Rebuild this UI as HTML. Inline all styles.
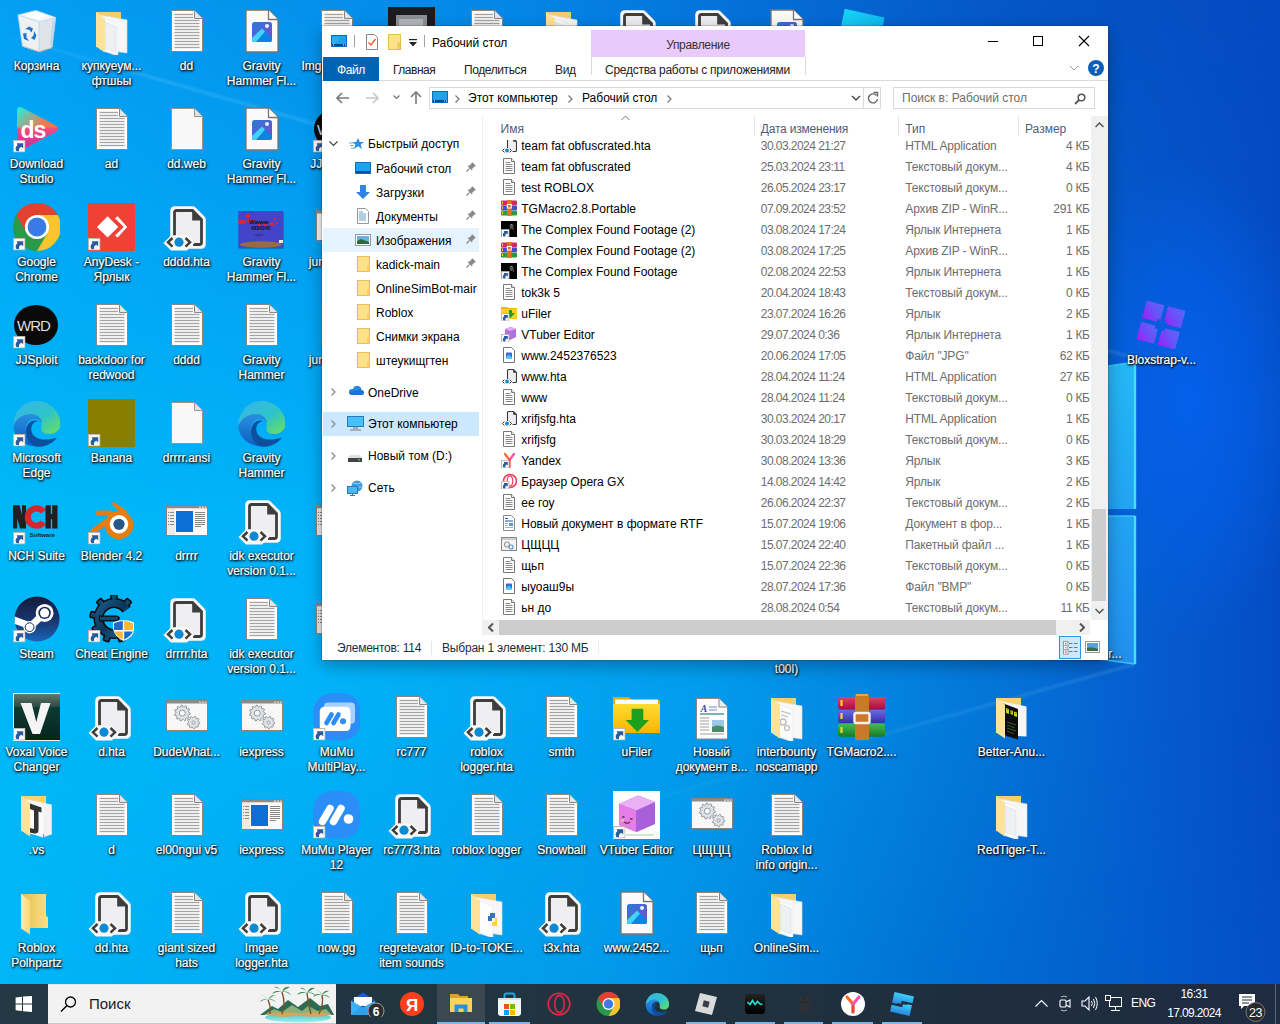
<!DOCTYPE html><html><head><meta charset="utf-8"><style>
*{box-sizing:border-box}
html,body{margin:0;padding:0}
body{width:1280px;height:1024px;overflow:hidden;position:relative;font-family:"Liberation Sans",sans-serif;font-size:12px;background:#0570d8}
.abs{position:absolute}
#wall{position:absolute;left:0;top:0;width:1280px;height:1024px}
.ic{position:absolute;width:75px;height:98px}
.ic svg.g{position:absolute;left:13px;top:7px;width:48px;height:48px}
.lb{position:absolute;left:0;top:59px;width:75px;text-align:center;color:#fff;-webkit-text-stroke:.2px #fff;line-height:15px;font-size:12px;text-shadow:1px 1px 2px rgba(0,0,0,1),0 1px 3px rgba(0,0,0,.8),0 0 2px rgba(0,0,0,.6);white-space:nowrap}
#win{position:absolute;left:322px;top:26px;width:786px;height:634px;background:#fff;box-shadow:0 0 0 1px rgba(40,40,40,.18),0 5px 16px rgba(0,0,0,.32)}
#tb{position:absolute;left:0;top:984px;width:1280px;height:40px;background:linear-gradient(90deg,#233a44 0%,#21343f 40%,#1f2e3e 74%,#1e2b42 100%)}
.t{position:absolute;white-space:nowrap}
</style></head><body>
<svg id="wall" width="1280" height="1024" viewBox="0 0 1280 1024">
<defs>
<linearGradient id="gm" x1="0" y1="0" x2="1280" y2="0" gradientUnits="userSpaceOnUse">
<stop offset="0" stop-color="#00b8f8"/><stop offset="0.25" stop-color="#02b2f9"/><stop offset="0.55" stop-color="#029cec"/><stop offset="0.78" stop-color="#0474d8"/><stop offset="0.9" stop-color="#065cce"/><stop offset="1" stop-color="#044cc4"/>
</linearGradient>
<linearGradient id="gt" x1="0" y1="0" x2="1280" y2="0" gradientUnits="userSpaceOnUse">
<stop offset="0" stop-color="#039ff4"/><stop offset="0.41" stop-color="#0485e5"/><stop offset="0.78" stop-color="#0556c6"/><stop offset="1" stop-color="#044ac0"/>
</linearGradient>
<linearGradient id="gb" x1="0" y1="0" x2="1280" y2="0" gradientUnits="userSpaceOnUse">
<stop offset="0" stop-color="#00b6f8"/><stop offset="0.47" stop-color="#029aea"/><stop offset="0.74" stop-color="#0070d4"/><stop offset="1" stop-color="#044ec4"/>
</linearGradient>
<linearGradient id="mt" x1="0" y1="0" x2="0" y2="1024" gradientUnits="userSpaceOnUse">
<stop offset="0" stop-color="#fff"/><stop offset="0.5" stop-color="#000"/>
</linearGradient>
<linearGradient id="mb" x1="0" y1="0" x2="0" y2="1024" gradientUnits="userSpaceOnUse">
<stop offset="0.7" stop-color="#000"/><stop offset="0.95" stop-color="#fff"/>
</linearGradient>
<mask id="mkt"><rect width="1280" height="1024" fill="url(#mt)"/></mask>
<mask id="mkb"><rect width="1280" height="1024" fill="url(#mb)"/></mask>
<filter id="bl2"><feGaussianBlur stdDeviation="1.2"/></filter>
</defs>
<rect width="1280" height="1024" fill="url(#gm)"/>
<rect width="1280" height="1024" fill="url(#gt)" mask="url(#mkt)"/>
<rect width="1280" height="1024" fill="url(#gb)" mask="url(#mkb)"/>
<radialGradient id="glow" cx="1190" cy="400" r="220" gradientUnits="userSpaceOnUse" gradientTransform="translate(1190 400) scale(.55 1.1) translate(-1190 -400)"><stop offset="0" stop-color="#0462ee" stop-opacity=".9"/><stop offset=".55" stop-color="#0460ea" stop-opacity=".55"/><stop offset="1" stop-color="#0460ea" stop-opacity="0"/></radialGradient>
<linearGradient id="pane" x1="0" y1="362" x2="0" y2="664" gradientUnits="userSpaceOnUse"><stop offset="0" stop-color="#26b8f6"/><stop offset=".25" stop-color="#22aef4"/><stop offset=".8" stop-color="#2298f2"/><stop offset="1" stop-color="#2090ee"/></linearGradient>
<rect x="1000" y="150" width="280" height="520" fill="url(#glow)"/>
<linearGradient id="sl1" x1="0" y1="0" x2="1135" y2="0" gradientUnits="userSpaceOnUse"><stop offset="0" stop-color="#9fe4ff" stop-opacity="0"/><stop offset=".12" stop-color="#9fe4ff" stop-opacity=".2"/><stop offset="1" stop-color="#9fe4ff" stop-opacity=".15"/></linearGradient><linearGradient id="sl2" x1="0" y1="0" x2="1135" y2="0" gradientUnits="userSpaceOnUse"><stop offset="0" stop-color="#9fe4ff" stop-opacity="0"/><stop offset=".5" stop-color="#9fe4ff" stop-opacity=".02"/><stop offset="1" stop-color="#9fe4ff" stop-opacity=".16"/></linearGradient><path d="M0 34L1135 358" stroke="url(#sl1)" stroke-width="3" filter="url(#bl2)"/>
<path d="M0 982L1135 664" stroke="url(#sl2)" stroke-width="3" filter="url(#bl2)"/>
<polygon points="1000,382 1135,362 1135,509 1000,509" fill="url(#pane)"/>
<polygon points="1000,516 1135,516 1135,664 1000,646" fill="url(#pane)"/>
<path d="M1135 362V509M1135 516V664" stroke="#48dcff" stroke-width="2.4"/>
<path d="M1000 382L1135 362M1000 516H1135M1000 646L1135 664" stroke="#40d0ff" stroke-width="1.6" stroke-opacity=".8"/>
</svg>
<svg width="0" height="0" style="position:absolute"><defs><symbol id="s-txt" viewBox="0 0 48 48"><path d="M9.5 3.5H32.5L40.5 11.5V44.5H9.5Z" fill="#fdfdfd" stroke="#8c8680"/><path d="M32.5 3.5V11.5H40.5" fill="#e6e6e6" stroke="#8c8680"/><g stroke="#a4a4a4" stroke-width="1.3"><path d="M12.5 7.5H31"/><path d="M12.5 10.5H31"/><path d="M12.5 13.5H37.5"/><path d="M12.5 16.5H37.5"/><path d="M12.5 19.5H37.5"/><path d="M12.5 22.5H37.5"/><path d="M12.5 25.5H37.5"/><path d="M12.5 28.5H37.5"/><path d="M12.5 31.5H37.5"/><path d="M12.5 34.5H37.5"/><path d="M12.5 37.5H37.5"/><path d="M12.5 40.5H37.5"/></g></symbol><symbol id="s-blank" viewBox="0 0 48 48"><path d="M9.5 3.5H32.5L40.5 11.5V44.5H9.5Z" fill="#f8f8f8" stroke="#9a9490"/><path d="M32.5 3.5V11.5H40.5" fill="#e2e2e2" stroke="#9a9490"/></symbol><symbol id="s-img" viewBox="0 0 48 48"><defs><linearGradient id="imgg" x1="0" y1="0" x2="1" y2="1"><stop offset="0" stop-color="#2a7ad8"/><stop offset="1" stop-color="#7a4ac8"/></linearGradient></defs><path d="M9 3H31.5L41 12.5V45H9Z" fill="#fafafa" stroke="#7a746e" stroke-width="1.3"/><path d="M31.5 3V12.5H41" fill="#fff" stroke="#7a746e" stroke-width="1.3"/><rect x="15" y="15" width="20" height="20" rx="2.5" fill="url(#imgg)"/><path d="M15 31L25 21.5L35 31V32.5Q35 35 32.5 35H17.5Q15 35 15 32.5Z" fill="#0c84e4"/><path d="M15 31L25 21.5L28 24.5L19 35H17.5Q15 35 15 32.5Z" fill="#42d2fa"/><circle cx="30" cy="19" r="2" fill="#e8f4ff"/></symbol><symbol id="s-hta" viewBox="0 0 48 48"><path d="M12.5 7.5H30.5L39.5 16.5V41.5H12.5Z" fill="#fbfbfb" stroke="#fbf8f6" stroke-width="8.5" stroke-linejoin="round"/><path d="M12.5 9.5Q12.5 7.5 14.5 7.5H30.5L39.5 16.5V39.5Q39.5 41.5 37.5 41.5H14.5Q12.5 41.5 12.5 39.5Z" fill="#efeff2"/><path d="M12.5 32.5V9.5Q12.5 7.5 14.5 7.5H30.5L39.5 16.5V39.5Q39.5 41.5 37.5 41.5H31" fill="none" stroke="#3e3e3e" stroke-width="2.8"/><path d="M30.2 7.5V17.5H39.5Z" fill="#3e3e3e"/><path d="M1.5 40L9 32.5H25L32.5 40L25 47.5H9Z" fill="#fbf8f6"/><path d="M10.5 35L6 39.3L10.5 43.6M23.5 35L28 39.3L23.5 43.6" stroke="#3e3e3e" stroke-width="2.5" fill="none"/><circle cx="17" cy="39.2" r="4.6" fill="#0a8ad2"/></symbol><symbol id="s-folder" viewBox="0 0 48 48"><defs><linearGradient id="fbk" x1="0" x2="1"><stop offset="0" stop-color="#e6bd50"/><stop offset="1" stop-color="#fadf86"/></linearGradient><linearGradient id="ffr" x1="0" x2="1"><stop offset="0" stop-color="#feeaa8"/><stop offset="1" stop-color="#fbd878"/></linearGradient></defs><path d="M9 5H34V26.5L36 28.5V39H9Z" fill="url(#fbk)"/><path d="M9 5L18 11.5V45.5L9 39.5Z" fill="url(#ffr)"/></symbol><symbol id="s-foldergear" viewBox="0 0 48 48"><path d="M9 5H34V40H9Z" fill="#f2cf6c"/><path d="M13 8L40 13V46L13 42Z" fill="#f7f7f7" stroke="#e2e2e2" stroke-width=".6"/><path d="M16 11L31 17V49L16 44Z" fill="#fcfcfc" stroke="#e6e6e6" stroke-width=".5"/><path d="M19 18L29 21M19 22L26 24" stroke="#9aa" stroke-width=".8"/><circle cx="21" cy="29" r="3" fill="none" stroke="#b8bcc0" stroke-width="1.4"/><circle cx="25" cy="35" r="2.5" fill="none" stroke="#b8bcc0" stroke-width="1.2"/><path d="M9 5L18 11.5V45.5L9 39.5Z" fill="#fde39a"/></symbol><symbol id="s-folderpy" viewBox="0 0 48 48"><path d="M9 5H34V40H9Z" fill="#f2cf6c"/><path d="M13 8L40 13V46L13 42Z" fill="#f7f7f7" stroke="#e2e2e2" stroke-width=".6"/><path d="M16 11L31 17V49L16 44Z" fill="#fcfcfc" stroke="#e6e6e6" stroke-width=".5"/><path d="M9 5L18 11.5V45.5L9 39.5Z" fill="#fde39a"/><path d="M28 24h5v5h-3v3h-4v-5h2z" fill="#3b73b0"/><path d="M33 29h2v8h-5v-4h3z" fill="#ffd43b"/></symbol><symbol id="s-folderdark" viewBox="0 0 48 48"><path d="M9 5H34V40H9Z" fill="#f4d474"/><path d="M13 8L39.5 13.5V43.5L13 42Z" fill="#f6f6f6"/><path d="M12.5 9L31 16V46.5L18 42.5V12Z" fill="#0c0c0c"/><path d="M19 15L22 16V21L19 20ZM23.5 17L26 18V22L23.5 21ZM27 18.5L30 19.5V24L27 23Z" fill="#b8d820"/><path d="M20 16.5h1.5M24 19h1.5M28 20.5h1.5" stroke="#f05020" stroke-width="1"/><path d="M20 29L29 32M20 32L28 35M20 35L29 38M20 38L27 41" stroke="#4a6a2a" stroke-width=".8"/><path d="M9 5L18 11.5V45.5L9 39.5Z" fill="#fde39a"/></symbol><symbol id="s-folderj" viewBox="0 0 48 48"><path d="M9 5H34V40H9Z" fill="#f4d474"/><path d="M13 8L39.5 13.5V43.5L13 42Z" fill="#f6f6f6"/><path d="M12.5 9L31 16V46.5L18 42.5V12Z" fill="#fafafa"/><path d="M18 12.5L29.5 16.5V21.5L26.5 20.5V39Q26.5 43 22 42.5L18 41.5V37L22 38V19.5L18 18Z" fill="#333"/><path d="M32 15L39.5 14V43.5L32 46Z" fill="#f2f2f2"/><path d="M9 5L18 11.5V45.5L9 39.5Z" fill="#fde39a"/></symbol><symbol id="s-appwin" viewBox="0 0 48 48"><rect x="4.5" y="8.5" width="41" height="30" fill="#f4f4f4" stroke="#8a8480"/><rect x="5" y="9" width="40" height="2.5" fill="#888c90"/><path d="M37 10.2h2M40 10.2h2M43 10.2h1.5" stroke="#ddd" stroke-width="1.2"/><rect x="5" y="11.5" width="8" height="26.5" fill="#ebebeb"/><rect x="13" y="11.5" width="32" height="26.5" fill="#fafafa"/><rect x="14" y="14" width="17" height="21" fill="#0a70d6"/><g stroke="#888" stroke-width="1"><path d="M6 15.5h1M6 18.5h1M6 21.5h1M6 24.5h1M6 27.5h1M8 15.5h4M8 18.5h4M8 21.5h4M8 24.5h4M8 27.5h4"/><path d="M33 15.5h10M33 17.5h10M33 19.5h10M33 21.5h10M33 23.5h10M33 25.5h10M33 27.5h10M33 29.5h6"/></g></symbol><symbol id="s-gears" viewBox="0 0 48 48"><rect x="4.5" y="7.5" width="41" height="30" fill="#f8f8f8" stroke="#8a8480"/><rect x="5" y="8" width="40" height="2.5" fill="#888c90"/><path d="M37 9.2h2M40 9.2h2M43 9.2h1.5" stroke="#ddd" stroke-width="1.2"/><polygon points="28.30,20.10 28.22,21.24 26.34,21.87 26.03,22.72 27.03,24.43 26.35,25.34 24.43,24.86 23.71,25.40 23.62,27.38 22.55,27.78 21.20,26.34 20.30,26.40 19.16,28.02 18.05,27.78 17.68,25.83 16.89,25.40 15.06,26.15 14.25,25.34 15.00,23.51 14.57,22.72 12.62,22.35 12.38,21.24 14.00,20.10 14.06,19.20 12.62,17.85 13.02,16.78 15.00,16.69 15.54,15.97 15.06,14.05 15.97,13.37 17.68,14.37 18.53,14.06 19.16,12.18 20.30,12.10 21.20,13.86 22.07,14.06 23.62,12.82 24.63,13.37 24.43,15.34 25.06,15.97 27.03,15.77 27.58,16.78 26.34,18.33 26.54,19.20" fill="#dfe3e7" stroke="#8c9096" stroke-width=".9"/><circle cx="20.3" cy="20.1" r="3" fill="#f8f8f8" stroke="#8c9096" stroke-width=".9"/><polygon points="37.80,29.50 37.70,30.59 36.10,31.18 35.74,31.95 36.33,33.55 35.55,34.33 33.95,33.74 33.18,34.10 32.59,35.70 31.50,35.80 30.65,34.33 29.82,34.10 28.35,34.96 27.45,34.33 27.75,32.65 27.26,31.95 25.58,31.65 25.30,30.59 26.60,29.50 26.67,28.65 25.58,27.35 26.04,26.35 27.75,26.35 28.35,25.75 28.35,24.04 29.35,23.58 30.65,24.67 31.50,24.60 32.59,23.30 33.65,23.58 33.95,25.26 34.65,25.75 36.33,25.45 36.96,26.35 36.10,27.82 36.33,28.65" fill="#dfe3e7" stroke="#8c9096" stroke-width=".9"/><circle cx="31.5" cy="29.5" r="1.5" fill="#f8f8f8" stroke="#8c9096" stroke-width=".9"/></symbol><symbol id="s-recycle" viewBox="0 0 48 48"><path d="M6 8L27.2 14.8V44.7L10.5 39.2Z" fill="#eef0f2" stroke="#c4dcf0" stroke-width=".8"/><path d="M27.2 14.8L43.7 10.5L40 40.5L27.2 44.7Z" fill="#dfe4e8" stroke="#c4dcf0" stroke-width=".8"/><path d="M40.5 14L43 11L40 40L38 38Z" fill="#b8d4ec" opacity=".8"/><path d="M24 3.5L43.7 10.5L27.2 14.8L6 8Z" fill="#f6f7f8" stroke="#c8dcee" stroke-width=".8"/><path d="M15 9Q18 3 21 6Q24 2 27 7Q31 4 33 9L28 12L16 10Z" fill="#fff"/><path d="M10.5 39.2L27.2 44.7L40 40.5" fill="none" stroke="#d8b8a0" stroke-width="1"/><g fill="#1a74d4"><path d="M13.5 22L17 19.5L21 21.5L19.5 25.5L17.5 23Z"/><path d="M22 24L24.5 28.5L22.5 33L19 31L21.5 28.5Z"/><path d="M17 34L12 32L11 26.5L14.5 26L14.5 30.5Z"/></g></symbol><symbol id="s-chrome" viewBox="0 0 48 48"><circle cx="25" cy="24" r="23.9" fill="#2a9a48"/><path d="M25 24L25 12L45.7 12A23.9 23.9 0 0 0 4.3 12L14.6 30Z" fill="#e3412f"/><path d="M25 24L25 12L45.7 12A23.9 23.9 0 0 1 25 47.9L35.4 30Z" fill="#fcc42c"/><circle cx="25" cy="24" r="12.1" fill="#fff"/><circle cx="25" cy="24" r="9.4" fill="#3a7ae6"/></symbol><symbol id="s-edge" viewBox="0 0 48 48"><defs><linearGradient id="edA" x1="0" y1="0" x2="1" y2="1"><stop offset="0" stop-color="#38b4f0"/><stop offset=".55" stop-color="#2ec4c8"/><stop offset="1" stop-color="#6ee05a"/></linearGradient><linearGradient id="edB" x1="0" y1="0" x2="0" y2="1"><stop offset="0" stop-color="#2a8ee0"/><stop offset="1" stop-color="#0c60c0"/></linearGradient></defs><path d="M1.5 27A23.5 23.5 0 0 1 48.5 24C48.5 31 44 35 37 35C31 35 28.5 32 29.5 28C30.5 23 27 18 21 18C12 18 4 22 1.5 27Z" fill="url(#edA)"/><path d="M1.5 27C3 21 10 15 19 15C26 15 30 20 30 24C28 20 24 19 20 20C15 22 13 27 14 33C15 40 20 45 24 47.5C11 46.5 1.5 38 1.5 27Z" fill="url(#edB)"/><path d="M14 32C14 24 21 20 26 22C21 23 18.5 27 19.5 32C21 40 31 43 45 38.5C41 44.5 33 48 25 47.8C18.5 46 14 40 14 32Z" fill="#0e4e9e"/></symbol><symbol id="s-anydesk" viewBox="0 0 48 48"><rect x="1" y="0" width="47" height="48" fill="#ef4136"/><path d="M9.9 23.9L20.6 13.2L31.3 23.9L20.6 34.6Z" fill="#fff"/><path d="M28 15.2L30.7 13.2L40.2 23.9L30.7 34.6L28 32.6L36.7 23.9Z" fill="#fff"/></symbol><symbol id="s-steam" viewBox="0 0 48 48"><defs><linearGradient id="stg" x1="0" y1="0" x2="0" y2="1"><stop offset="0" stop-color="#141a3a"/><stop offset=".6" stop-color="#1a3a78"/><stop offset="1" stop-color="#1a66b8"/></linearGradient></defs><circle cx="25" cy="24" r="22.5" fill="url(#stg)"/><path d="M2.6 21.5L16 26.5L14 33L2.8 29Z" fill="#fff"/><path d="M17.6 32.2L32.6 17.9" stroke="#fff" stroke-width="7"/><circle cx="32.6" cy="17.9" r="9" fill="#fff"/><circle cx="32.6" cy="17.9" r="6.2" fill="#1c2a5a"/><circle cx="32.6" cy="17.9" r="4.6" fill="#fff"/><circle cx="17.6" cy="32.2" r="6.2" fill="#fff"/><circle cx="17.6" cy="32.2" r="4.4" fill="none" stroke="#1c2a5a" stroke-width="1"/></symbol><symbol id="s-blender" viewBox="0 0 48 48"><path d="M3 33L6.5 36.5L22 27L18.5 22Z" fill="#e87d0d"/><rect x="9" y="13.5" width="16" height="5" rx="2.5" fill="#e87d0d"/><path d="M24.5 6.5Q26.5 4.5 28.5 6L41 15L36 18.5Z" fill="#e87d0d"/><circle cx="32" cy="28" r="14.2" fill="#e87d0d"/><circle cx="32" cy="27.3" r="9.2" fill="#fff"/><circle cx="32" cy="27.3" r="5.6" fill="#265787"/></symbol><symbol id="s-cheat" viewBox="0 0 48 48"><defs><linearGradient id="ceg" x1="0" y1="0" x2="1" y2="1"><stop offset="0" stop-color="#1a5a8a"/><stop offset=".5" stop-color="#0c3458"/><stop offset="1" stop-color="#1a6aa0"/></linearGradient></defs><g fill="#0a0a0a"><rect x="36.75" y="3.66" width="7.5" height="7.5" rx="2" transform="rotate(40 40.50 7.41)"/><rect x="23.25" y="-1.25" width="7.5" height="7.5" rx="2" transform="rotate(0 27.00 2.50)"/><rect x="9.75" y="3.66" width="7.5" height="7.5" rx="2" transform="rotate(-40 13.50 7.41)"/><rect x="2.57" y="16.10" width="7.5" height="7.5" rx="2" transform="rotate(-80 6.32 19.85)"/><rect x="5.06" y="30.25" width="7.5" height="7.5" rx="2" transform="rotate(-120 8.81 34.00)"/><rect x="16.07" y="39.48" width="7.5" height="7.5" rx="2" transform="rotate(-160 19.82 43.23)"/><rect x="30.43" y="39.48" width="7.5" height="7.5" rx="2" transform="rotate(-200 34.18 43.23)"/></g><path d="M39.70 14.61 A15.5 15.5 0 1 0 34.75 36.92" fill="none" stroke="#0a0a0a" stroke-width="10"/><g fill="#14466e"><rect x="38.25" y="5.16" width="4.5" height="4.5" rx="1" transform="rotate(40 40.50 7.41)"/><rect x="24.75" y="0.25" width="4.5" height="4.5" rx="1" transform="rotate(0 27.00 2.50)"/><rect x="11.25" y="5.16" width="4.5" height="4.5" rx="1" transform="rotate(-40 13.50 7.41)"/><rect x="4.07" y="17.60" width="4.5" height="4.5" rx="1" transform="rotate(-80 6.32 19.85)"/><rect x="6.56" y="31.75" width="4.5" height="4.5" rx="1" transform="rotate(-120 8.81 34.00)"/><rect x="17.57" y="40.98" width="4.5" height="4.5" rx="1" transform="rotate(-160 19.82 43.23)"/><rect x="31.93" y="40.98" width="4.5" height="4.5" rx="1" transform="rotate(-200 34.18 43.23)"/></g><path d="M39.70 14.61 A15.5 15.5 0 1 0 34.75 36.92" fill="none" stroke="url(#ceg)" stroke-width="7"/><path d="M12 20.5H30Q36 23 30 26.5H12Z" fill="#0a0a0a"/><path d="M13 21.8H29.5Q33 23.5 29.5 25.2H13Z" fill="#14466e"/><path d="M26 27.5Q31 25 36.5 25.2Q42 25 47 27.5V34Q47 42 36.5 46Q28 42 26 34Z" fill="#fff"/><path d="M27 28.2Q31 26.2 35.8 26V35H27Z" fill="#1a6ad0"/><path d="M37.2 26Q42 26.2 46 28.2V35H37.2Z" fill="#fbb830"/><path d="M27.2 36.5H35.8V44.5Q29 41 27.2 36.5Z" fill="#fbb830"/><path d="M37.2 36.5H45.8Q44 41 37.2 44.5Z" fill="#1a6ad0"/></symbol><symbol id="s-nch" viewBox="0 0 48 48"><path d="M1 8.3H7.5L10 18V8.3H14V31.6H8L5.2 21.5V31.6H1Z" fill="#231f20"/><path d="M34 13A11.8 11.8 0 1 0 34 27L28.8 23.5A5.6 5.6 0 1 1 28.8 16.5Z" fill="#d8262c"/><path d="M33.5 8.3H38.8V17H40.2V8.3H45.5V31.6H40.2V22.3H38.8V31.6H33.5Z" fill="#231f20"/><text x="17.5" y="40" font-family="Liberation Sans" font-weight="bold" font-size="6.2" fill="#231f20" letter-spacing="-.1">Software</text></symbol><symbol id="s-voxal" viewBox="0 0 48 48"><defs><linearGradient id="vxg" x1="0" y1="0" x2="0" y2="1"><stop offset="0" stop-color="#667a70"/><stop offset=".28" stop-color="#2a4a42"/><stop offset=".3" stop-color="#0c3a32"/><stop offset="1" stop-color="#08241e"/></linearGradient></defs><rect x="1.5" y="0.5" width="47" height="47" fill="url(#vxg)" stroke="#f4f4f4" stroke-width="1"/><path d="M8.5 10H19.5L24.3 29L29 10H38.5L28 41H20.5Z" fill="#f4f4f4"/></symbol><symbol id="s-mumu" viewBox="0 0 48 48"><path d="M1.2 22Q1.2 0 23 0H27Q48.8 0 48.8 22V26Q48.8 47.5 27 47.5H23Q1.2 47.5 1.2 26Z" fill="#2b8ef8"/><path d="M10.5 30.5L18 17.5M21.5 30.5L29 17.5" stroke="#fff" stroke-width="7.5" stroke-linecap="round"/><circle cx="36.5" cy="28" r="4.8" fill="#fff"/></symbol><symbol id="s-mumumulti" viewBox="0 0 48 48"><path d="M1.2 22Q1.2 0 23 0H27Q48.8 0 48.8 22V26Q48.8 47.5 27 47.5H23Q1.2 47.5 1.2 26Z" fill="#2b8ef8"/><rect x="12" y="9.4" width="31" height="21.3" rx="4" fill="#a9d1ff"/><rect x="7.8" y="13.8" width="30.7" height="24.2" rx="4.5" fill="#fff"/><path d="M14.5 30L19.5 21.5M21.5 30L26.5 21.5" stroke="#2b8ef8" stroke-width="4.6" stroke-linecap="round"/><circle cx="31" cy="28.3" r="3" fill="#2b8ef8"/></symbol><symbol id="s-ufiler" viewBox="0 0 48 48"><path d="M1 4H17L20 7H48V40H1Z" fill="#e8a800"/><rect x="3" y="6.5" width="43" height="5" fill="#fafafa"/><defs><linearGradient id="ufg" x1="0" y1="0" x2="0" y2="1"><stop offset="0" stop-color="#ffdc30"/><stop offset="1" stop-color="#f8b400"/></linearGradient></defs><path d="M1 11H48V40H1Z" fill="url(#ufg)"/><path d="M19.6 15.7H31.3V27H37L25.4 39L13.7 27H19.6Z" fill="#1ca01c"/></symbol><symbol id="s-vtuber" viewBox="0 0 48 48"><rect x="1" y="0" width="47.5" height="48" fill="#fdfdfd"/><path d="M7 13L26 4.5L43 11V33L25 41L7 34Z" fill="#a860d8"/><path d="M7 13L24 19.5L43 11L26 4.5Z" fill="#eab0f6"/><path d="M7 13L24 19.5V41L7 34Z" fill="#e67ce6"/><path d="M10 26h2.5M18 28h2.5" stroke="#5a3a3a" stroke-width="1.6"/><path d="M12 31q3 2.5 6 0" stroke="#5a3a3a" stroke-width="1.3" fill="none"/><circle cx="10.5" cy="29.5" r="1.2" fill="#f8e070" opacity=".8"/><path d="M14 44h28" stroke="#ccc" stroke-width="2" opacity=".6"/></symbol><symbol id="s-winrar" viewBox="0 0 48 48"><defs><linearGradient id="wr1" x1="0" y1="0" x2="0" y2="1"><stop offset="0" stop-color="#e0406a"/><stop offset="1" stop-color="#a01040"/></linearGradient><linearGradient id="wr2" x1="0" y1="0" x2="0" y2="1"><stop offset="0" stop-color="#6a6ae8"/><stop offset="1" stop-color="#3030a8"/></linearGradient><linearGradient id="wr3" x1="0" y1="0" x2="0" y2="1"><stop offset="0" stop-color="#40c050"/><stop offset="1" stop-color="#187a28"/></linearGradient></defs><rect x="1" y="4" width="47.5" height="12.5" rx="3" fill="url(#wr1)"/><rect x="1" y="17" width="47.5" height="13" rx="3" fill="url(#wr2)"/><rect x="1" y="30.5" width="47.5" height="13.3" rx="3" fill="url(#wr3)"/><path d="M4.5 7v6M4.5 20v6M4.5 34v6" stroke="#f8d030" stroke-width="2.2"/><rect x="18" y="1" width="14" height="46" rx="1.5" fill="#c87a2a"/><path d="M19 2h12" stroke="#e8a848" stroke-width="2"/><rect x="17.5" y="20" width="15" height="10" rx="1.5" fill="none" stroke="#f4f0e8" stroke-width="2.4"/></symbol><symbol id="s-ds" viewBox="0 0 48 48"><defs><linearGradient id="dsA" x1="0" y1="0" x2="1" y2="1"><stop offset="0" stop-color="#18f4e0"/><stop offset=".5" stop-color="#f07a52"/><stop offset="1" stop-color="#f0704a"/></linearGradient><linearGradient id="dsB" x1="0" y1="0" x2="0" y2="1"><stop offset="0" stop-color="#f05080" stop-opacity="0"/><stop offset=".45" stop-color="#f04a80" stop-opacity="0"/><stop offset=".5" stop-color="#f04a80"/><stop offset="1" stop-color="#c828a8"/></linearGradient></defs><path d="M5 6Q5 0 11 3L44 20.5Q48 23.5 44 26.5L11 44.5Q5 48 5 42Z" fill="url(#dsA)"/><path d="M5 6Q5 0 11 3L44 20.5Q48 23.5 44 26.5L11 44.5Q5 48 5 42Z" fill="url(#dsB)"/><text x="8.5" y="32.5" font-family="Liberation Sans" font-weight="bold" font-size="23" fill="#fff" letter-spacing="-1">ds</text></symbol><symbol id="s-jjs" viewBox="0 0 48 48"><ellipse cx="24" cy="24" rx="22" ry="20" fill="#0a0a0a"/><text x="5" y="30" font-family="Liberation Sans" font-size="15" fill="#ddd" letter-spacing="-1">WRD</text></symbol><symbol id="s-banana" viewBox="0 0 48 48"><rect x="1" y="0" width="47" height="48" fill="#8b7d00"/></symbol><symbol id="s-gravpic" viewBox="0 0 48 48"><rect x="2" y="9" width="45" height="37" fill="#1a2a60" opacity=".35"/><rect x="1.3" y="8" width="44.7" height="36.7" fill="#4444c8"/><ellipse cx="24" cy="41.5" rx="21" ry="3.2" fill="#9a6a44"/><g fill="#f02020"><ellipse cx="11" cy="13" rx="2.5" ry="2"/><ellipse cx="5" cy="19" rx="4" ry="2"/><ellipse cx="14" cy="18" rx="4" ry="1.5"/><ellipse cx="35" cy="21" rx="2.5" ry="1.6"/><circle cx="38" cy="16" r="1.2"/><circle cx="40" cy="20" r="1"/><ellipse cx="22" cy="22" rx="2" ry="1"/><ellipse cx="28" cy="22" rx="2" ry="1"/></g><text x="12" y="21" font-family="Liberation Sans" font-weight="bold" font-size="6" fill="#111">Wwww</text><text x="14" y="27" font-family="Liberation Sans" font-weight="bold" font-size="5" fill="#111">4934345</text><text x="18" y="33" font-family="Liberation Sans" font-size="4" fill="#222">ssss</text><rect x="42" y="37" width="4" height="3" fill="#eee"/></symbol><symbol id="s-rtf" viewBox="0 0 48 48"><path d="M9.5 5.5H32L40.5 14V46H9.5Z" fill="#fdfdfd" stroke="#8c8680"/><path d="M32 5.5V14H40.5" fill="#ececec" stroke="#8c8680"/><text x="13.5" y="19" font-family="Liberation Serif" font-style="italic" font-weight="bold" font-size="10" fill="#2a4ab8">A</text><path d="M22 14h8M22 17h8" stroke="#6a8ad8" stroke-width="1.2"/><path d="M13 21h24" stroke="#3a9a8a" stroke-width="1.4"/><path d="M13 25h9M13 28h9M13 31h9M13 34h9M13 37h9M13 41h24" stroke="#a0a0a0" stroke-width="1.1"/><rect x="25" y="27" width="12" height="12" fill="#9ac8e8"/><path d="M25 34Q30 31 37 34V39H25Z" fill="#4a8a6a"/></symbol><symbol id="s-blox" viewBox="0 0 48 48"><defs><linearGradient id="bxg" x1="1" y1="0" x2="0" y2="1"><stop offset="0" stop-color="#5868f8"/><stop offset=".5" stop-color="#6a50f8"/><stop offset="1" stop-color="#a818f8"/></linearGradient></defs><g transform="rotate(15 24 24)" fill="url(#bxg)"><path d="M4 4H22V19H19V22H4Z"/><path d="M26 4H44V22H29V19H26Z"/><path d="M4 26H19V29H22V44H4Z"/><path d="M29 26H44V44H26V29H29Z"/></g></symbol><symbol id="s-darkapp" viewBox="0 0 48 48"><rect x="1" y="0" width="47" height="48" fill="#1c1c20"/><rect x="9" y="8" width="31" height="30" fill="#8e8e96"/><rect x="12" y="12" width="24" height="12" fill="#b4b4bc"/></symbol><symbol id="s-cyan" viewBox="0 0 48 48"><defs><linearGradient id="cyg" x1="0" y1="0" x2="1" y2="1"><stop offset="0" stop-color="#18d8fa"/><stop offset="1" stop-color="#0aa8e8"/></linearGradient></defs><path d="M7.7 1.7L47.5 10.6L41 44L1 35Z" fill="url(#cyg)"/><path d="M20 24h8v8h-8z" fill="#0a3a7a" transform="rotate(13 24 28)"/></symbol><symbol id="s-shortcut" viewBox="0 0 12.5 12.5"><rect x=".5" y=".5" width="11.5" height="11.5" fill="#fbfbfb" stroke="#c0b8b0"/><path d="M3 10.5Q1.8 7 4.5 5.3L3.8 3.2H10.2V8.2L8.2 6.8Q5.5 8 6 11Q4 11.5 3 10.5Z" fill="#2c5aa0"/></symbol><symbol id="s-folderdoc" viewBox="0 0 48 48"><path d="M9 5H34V40H9Z" fill="#f2cf6c"/><path d="M13 8L40 13V46L13 42Z" fill="#f7f7f7" stroke="#e2e2e2" stroke-width=".6"/><path d="M16 11L31 17V49L16 44Z" fill="#fcfcfc" stroke="#e6e6e6" stroke-width=".5"/><path d="M18 15L29 19.5V45L18 41Z" fill="#eef0f2" stroke="#9ab8d8" stroke-width=".5" stroke-dasharray="1 1"/><path d="M9 5L18 11.5V45.5L9 39.5Z" fill="#fde39a"/></symbol></defs></svg>
<div id="desk"><div class="ic" style="left:-1px;top:0px"><svg class="g" viewBox="0 0 48 48"><use href="#s-recycle"/></svg><div class="lb">Корзина</div></div><div class="ic" style="left:74px;top:0px"><svg class="g" viewBox="0 0 48 48"><use href="#s-folderdoc"/></svg><div class="lb">купкуеум...<br>фтшьы</div></div><div class="ic" style="left:149px;top:0px"><svg class="g" viewBox="0 0 48 48"><use href="#s-txt"/></svg><div class="lb">dd</div></div><div class="ic" style="left:224px;top:0px"><svg class="g" viewBox="0 0 48 48"><use href="#s-img"/></svg><div class="lb">Gravity<br>Hammer Fl...</div></div><div class="ic" style="left:299px;top:0px"><svg class="g" viewBox="0 0 48 48"><use href="#s-txt"/></svg><div class="lb">Imgae logger</div></div><div class="ic" style="left:374px;top:0px"><svg class="g" viewBox="0 0 48 48"><use href="#s-darkapp"/></svg></div><div class="ic" style="left:449px;top:0px"><svg class="g" viewBox="0 0 48 48"><use href="#s-txt"/></svg></div><div class="ic" style="left:524px;top:0px"><svg class="g" viewBox="0 0 48 48"><use href="#s-folderdoc"/></svg></div><div class="ic" style="left:599px;top:0px"><svg class="g" viewBox="0 0 48 48"><use href="#s-hta"/></svg></div><div class="ic" style="left:674px;top:0px"><svg class="g" viewBox="0 0 48 48"><use href="#s-hta"/></svg></div><div class="ic" style="left:749px;top:0px"><svg class="g" viewBox="0 0 48 48"><use href="#s-img"/></svg></div><div class="ic" style="left:824px;top:0px"><svg class="g" viewBox="0 0 48 48"><use href="#s-cyan"/></svg></div><div class="ic" style="left:-1px;top:98px"><svg class="g" viewBox="0 0 48 48"><use href="#s-ds"/></svg><svg class="abs" style="left:14px;top:42px;width:12.5px;height:12.5px" viewBox="0 0 12.5 12.5"><use href="#s-shortcut"/></svg><div class="lb">Download<br>Studio</div></div><div class="ic" style="left:74px;top:98px"><svg class="g" viewBox="0 0 48 48"><use href="#s-txt"/></svg><div class="lb">ad</div></div><div class="ic" style="left:149px;top:98px"><svg class="g" viewBox="0 0 48 48"><use href="#s-blank"/></svg><div class="lb">dd.web</div></div><div class="ic" style="left:224px;top:98px"><svg class="g" viewBox="0 0 48 48"><use href="#s-img"/></svg><div class="lb">Gravity<br>Hammer Fl...</div></div><div class="ic" style="left:299px;top:98px"><svg class="g" viewBox="0 0 48 48"><use href="#s-jjs"/></svg><svg class="abs" style="left:14px;top:42px;width:12.5px;height:12.5px" viewBox="0 0 12.5 12.5"><use href="#s-shortcut"/></svg><div class="lb">JJSploit-8</div></div><div class="ic" style="left:-1px;top:196px"><svg class="g" viewBox="0 0 48 48"><use href="#s-chrome"/></svg><svg class="abs" style="left:14px;top:42px;width:12.5px;height:12.5px" viewBox="0 0 12.5 12.5"><use href="#s-shortcut"/></svg><div class="lb">Google<br>Chrome</div></div><div class="ic" style="left:74px;top:196px"><svg class="g" viewBox="0 0 48 48"><use href="#s-anydesk"/></svg><svg class="abs" style="left:14px;top:42px;width:12.5px;height:12.5px" viewBox="0 0 12.5 12.5"><use href="#s-shortcut"/></svg><div class="lb">AnyDesk -<br>Ярлык</div></div><div class="ic" style="left:149px;top:196px"><svg class="g" viewBox="0 0 48 48"><use href="#s-hta"/></svg><div class="lb">dddd.hta</div></div><div class="ic" style="left:224px;top:196px"><svg class="g" viewBox="0 0 48 48"><use href="#s-gravpic"/></svg><div class="lb">Gravity<br>Hammer Fl...</div></div><div class="ic" style="left:299px;top:196px"><svg class="g" viewBox="0 0 48 48"><use href="#s-gears"/></svg><div class="lb">juraj tool...</div></div><div class="ic" style="left:-1px;top:294px"><svg class="g" viewBox="0 0 48 48"><use href="#s-jjs"/></svg><svg class="abs" style="left:14px;top:42px;width:12.5px;height:12.5px" viewBox="0 0 12.5 12.5"><use href="#s-shortcut"/></svg><div class="lb">JJSploit</div></div><div class="ic" style="left:74px;top:294px"><svg class="g" viewBox="0 0 48 48"><use href="#s-txt"/></svg><div class="lb">backdoor for<br>redwood</div></div><div class="ic" style="left:149px;top:294px"><svg class="g" viewBox="0 0 48 48"><use href="#s-txt"/></svg><div class="lb">dddd</div></div><div class="ic" style="left:224px;top:294px"><svg class="g" viewBox="0 0 48 48"><use href="#s-txt"/></svg><div class="lb">Gravity<br>Hammer</div></div><div class="ic" style="left:299px;top:294px"><svg class="g" viewBox="0 0 48 48"><use href="#s-txt"/></svg><div class="lb">juraj tool...</div></div><div class="ic" style="left:-1px;top:392px"><svg class="g" viewBox="0 0 48 48"><use href="#s-edge"/></svg><svg class="abs" style="left:14px;top:42px;width:12.5px;height:12.5px" viewBox="0 0 12.5 12.5"><use href="#s-shortcut"/></svg><div class="lb">Microsoft<br>Edge</div></div><div class="ic" style="left:74px;top:392px"><svg class="g" viewBox="0 0 48 48"><use href="#s-banana"/></svg><svg class="abs" style="left:14px;top:42px;width:12.5px;height:12.5px" viewBox="0 0 12.5 12.5"><use href="#s-shortcut"/></svg><div class="lb">Banana</div></div><div class="ic" style="left:149px;top:392px"><svg class="g" viewBox="0 0 48 48"><use href="#s-blank"/></svg><div class="lb">drrrr.ansi</div></div><div class="ic" style="left:224px;top:392px"><svg class="g" viewBox="0 0 48 48"><use href="#s-edge"/></svg><div class="lb">Gravity<br>Hammer</div></div><div class="ic" style="left:-1px;top:490px"><svg class="g" viewBox="0 0 48 48"><use href="#s-nch"/></svg><svg class="abs" style="left:14px;top:42px;width:12.5px;height:12.5px" viewBox="0 0 12.5 12.5"><use href="#s-shortcut"/></svg><div class="lb">NCH Suite</div></div><div class="ic" style="left:74px;top:490px"><svg class="g" viewBox="0 0 48 48"><use href="#s-blender"/></svg><svg class="abs" style="left:14px;top:42px;width:12.5px;height:12.5px" viewBox="0 0 12.5 12.5"><use href="#s-shortcut"/></svg><div class="lb">Blender 4.2</div></div><div class="ic" style="left:149px;top:490px"><svg class="g" viewBox="0 0 48 48"><use href="#s-appwin"/></svg><div class="lb">drrrr</div></div><div class="ic" style="left:224px;top:490px"><svg class="g" viewBox="0 0 48 48"><use href="#s-hta"/></svg><div class="lb">idk executor<br>version 0.1...</div></div><div class="ic" style="left:299px;top:490px"><svg class="g" viewBox="0 0 48 48"><use href="#s-appwin"/></svg></div><div class="ic" style="left:-1px;top:588px"><svg class="g" viewBox="0 0 48 48"><use href="#s-steam"/></svg><svg class="abs" style="left:14px;top:42px;width:12.5px;height:12.5px" viewBox="0 0 12.5 12.5"><use href="#s-shortcut"/></svg><div class="lb">Steam</div></div><div class="ic" style="left:74px;top:588px"><svg class="g" viewBox="0 0 48 48"><use href="#s-cheat"/></svg><svg class="abs" style="left:14px;top:42px;width:12.5px;height:12.5px" viewBox="0 0 12.5 12.5"><use href="#s-shortcut"/></svg><div class="lb">Cheat Engine</div></div><div class="ic" style="left:149px;top:588px"><svg class="g" viewBox="0 0 48 48"><use href="#s-hta"/></svg><div class="lb">drrrr.hta</div></div><div class="ic" style="left:224px;top:588px"><svg class="g" viewBox="0 0 48 48"><use href="#s-txt"/></svg><div class="lb">idk executor<br>version 0.1...</div></div><div class="ic" style="left:299px;top:588px"><svg class="g" viewBox="0 0 48 48"><use href="#s-appwin"/></svg></div><div class="ic" style="left:749px;top:588px"><svg class="g" viewBox="0 0 48 48"><use href="#s-txt"/></svg><div class="lb">tool<br>t00l)</div></div><div class="ic" style="left:1049px;top:588px"><svg class="g" viewBox="0 0 48 48"><use href="#s-txt"/></svg><div class="lb">ModLoader...</div></div><div class="ic" style="left:-1px;top:686px"><svg class="g" viewBox="0 0 48 48"><use href="#s-voxal"/></svg><svg class="abs" style="left:14px;top:42px;width:12.5px;height:12.5px" viewBox="0 0 12.5 12.5"><use href="#s-shortcut"/></svg><div class="lb">Voxal Voice<br>Changer</div></div><div class="ic" style="left:74px;top:686px"><svg class="g" viewBox="0 0 48 48"><use href="#s-hta"/></svg><div class="lb">d.hta</div></div><div class="ic" style="left:149px;top:686px"><svg class="g" viewBox="0 0 48 48"><use href="#s-gears"/></svg><div class="lb">DudeWhat...</div></div><div class="ic" style="left:224px;top:686px"><svg class="g" viewBox="0 0 48 48"><use href="#s-gears"/></svg><div class="lb">iexpress</div></div><div class="ic" style="left:299px;top:686px"><svg class="g" viewBox="0 0 48 48"><use href="#s-mumumulti"/></svg><svg class="abs" style="left:14px;top:42px;width:12.5px;height:12.5px" viewBox="0 0 12.5 12.5"><use href="#s-shortcut"/></svg><div class="lb">MuMu<br>MultiPlay...</div></div><div class="ic" style="left:374px;top:686px"><svg class="g" viewBox="0 0 48 48"><use href="#s-txt"/></svg><div class="lb">rc777</div></div><div class="ic" style="left:449px;top:686px"><svg class="g" viewBox="0 0 48 48"><use href="#s-hta"/></svg><div class="lb">roblox<br>logger.hta</div></div><div class="ic" style="left:524px;top:686px"><svg class="g" viewBox="0 0 48 48"><use href="#s-txt"/></svg><div class="lb">smth</div></div><div class="ic" style="left:599px;top:686px"><svg class="g" viewBox="0 0 48 48"><use href="#s-ufiler"/></svg><svg class="abs" style="left:14px;top:42px;width:12.5px;height:12.5px" viewBox="0 0 12.5 12.5"><use href="#s-shortcut"/></svg><div class="lb">uFiler</div></div><div class="ic" style="left:674px;top:686px"><svg class="g" viewBox="0 0 48 48"><use href="#s-rtf"/></svg><div class="lb">Новый<br>документ в...</div></div><div class="ic" style="left:749px;top:686px"><svg class="g" viewBox="0 0 48 48"><use href="#s-foldergear"/></svg><div class="lb">interbounty<br>noscamapp</div></div><div class="ic" style="left:824px;top:686px"><svg class="g" viewBox="0 0 48 48"><use href="#s-winrar"/></svg><div class="lb">TGMacro2....</div></div><div class="ic" style="left:974px;top:686px"><svg class="g" viewBox="0 0 48 48"><use href="#s-folderdark"/></svg><div class="lb">Better-Anu...</div></div><div class="ic" style="left:-1px;top:784px"><svg class="g" viewBox="0 0 48 48"><use href="#s-folderj"/></svg><div class="lb">.vs</div></div><div class="ic" style="left:74px;top:784px"><svg class="g" viewBox="0 0 48 48"><use href="#s-txt"/></svg><div class="lb">d</div></div><div class="ic" style="left:149px;top:784px"><svg class="g" viewBox="0 0 48 48"><use href="#s-txt"/></svg><div class="lb">el00ngui v5</div></div><div class="ic" style="left:224px;top:784px"><svg class="g" viewBox="0 0 48 48"><use href="#s-appwin"/></svg><div class="lb">iexpress</div></div><div class="ic" style="left:299px;top:784px"><svg class="g" viewBox="0 0 48 48"><use href="#s-mumu"/></svg><svg class="abs" style="left:14px;top:42px;width:12.5px;height:12.5px" viewBox="0 0 12.5 12.5"><use href="#s-shortcut"/></svg><div class="lb">MuMu Player<br>12</div></div><div class="ic" style="left:374px;top:784px"><svg class="g" viewBox="0 0 48 48"><use href="#s-hta"/></svg><div class="lb">rc7773.hta</div></div><div class="ic" style="left:449px;top:784px"><svg class="g" viewBox="0 0 48 48"><use href="#s-txt"/></svg><div class="lb">roblox logger</div></div><div class="ic" style="left:524px;top:784px"><svg class="g" viewBox="0 0 48 48"><use href="#s-txt"/></svg><div class="lb">Snowball</div></div><div class="ic" style="left:599px;top:784px"><svg class="g" viewBox="0 0 48 48"><use href="#s-vtuber"/></svg><svg class="abs" style="left:14px;top:42px;width:12.5px;height:12.5px" viewBox="0 0 12.5 12.5"><use href="#s-shortcut"/></svg><div class="lb">VTuber Editor</div></div><div class="ic" style="left:674px;top:784px"><svg class="g" viewBox="0 0 48 48"><use href="#s-gears"/></svg><div class="lb">ЦЩЦЦ</div></div><div class="ic" style="left:749px;top:784px"><svg class="g" viewBox="0 0 48 48"><use href="#s-txt"/></svg><div class="lb">Roblox Id<br>info origin...</div></div><div class="ic" style="left:974px;top:784px"><svg class="g" viewBox="0 0 48 48"><use href="#s-folderdoc"/></svg><div class="lb">RedTiger-T...</div></div><div class="ic" style="left:-1px;top:882px"><svg class="g" viewBox="0 0 48 48"><use href="#s-folder"/></svg><div class="lb">Roblox<br>Polhpartz</div></div><div class="ic" style="left:74px;top:882px"><svg class="g" viewBox="0 0 48 48"><use href="#s-hta"/></svg><div class="lb">dd.hta</div></div><div class="ic" style="left:149px;top:882px"><svg class="g" viewBox="0 0 48 48"><use href="#s-txt"/></svg><div class="lb">giant sized<br>hats</div></div><div class="ic" style="left:224px;top:882px"><svg class="g" viewBox="0 0 48 48"><use href="#s-hta"/></svg><div class="lb">Imgae<br>logger.hta</div></div><div class="ic" style="left:299px;top:882px"><svg class="g" viewBox="0 0 48 48"><use href="#s-txt"/></svg><div class="lb">now.gg</div></div><div class="ic" style="left:374px;top:882px"><svg class="g" viewBox="0 0 48 48"><use href="#s-txt"/></svg><div class="lb">regretevator<br>item sounds</div></div><div class="ic" style="left:449px;top:882px"><svg class="g" viewBox="0 0 48 48"><use href="#s-folderpy"/></svg><div class="lb">ID-to-TOKE...</div></div><div class="ic" style="left:524px;top:882px"><svg class="g" viewBox="0 0 48 48"><use href="#s-hta"/></svg><div class="lb">t3x.hta</div></div><div class="ic" style="left:599px;top:882px"><svg class="g" viewBox="0 0 48 48"><use href="#s-img"/></svg><div class="lb">www.2452...</div></div><div class="ic" style="left:674px;top:882px"><svg class="g" viewBox="0 0 48 48"><use href="#s-txt"/></svg><div class="lb">щьп</div></div><div class="ic" style="left:749px;top:882px"><svg class="g" viewBox="0 0 48 48"><use href="#s-folderdoc"/></svg><div class="lb">OnlineSim...</div></div><div class="ic" style="left:1124px;top:294px"><svg class="g" viewBox="0 0 48 48"><use href="#s-blox"/></svg><div class="lb">Bloxstrap-v...</div></div></div>
<div id="win"><svg class="abs" style="left:9px;top:9px" width="16" height="12" viewBox="0 0 16 12"><rect x=".5" y=".5" width="15" height="11" fill="#1aa2f4" stroke="#0a6cc4"/><path d="M1 2L9 2L3 10H1Z" fill="#3cb4ff" opacity=".6"/><rect x="1" y="9" width="14" height="2" fill="#0a4a8a"/><rect x="2" y="9.5" width="1" height="1" fill="#fff"/><rect x="12" y="9.5" width="1" height="1" fill="#fff"/><rect x="14" y="9.5" width="1" height="1" fill="#fff"/></svg><div class="abs" style="left:32px;top:9px;width:1px;height:12px;background:#a0a0a0"></div><svg class="abs" style="left:44px;top:8px" width="12" height="16" viewBox="0 0 12 16"><path d="M.5 .5H8.5L11.5 3.5V15.5H.5Z" fill="#fff" stroke="#888"/><path d="M2.5 8.5L5 11L9.5 5" fill="none" stroke="#f05a28" stroke-width="1.4"/></svg><svg class="abs" style="left:66px;top:8px" width="13" height="16" viewBox="0 0 13 16"><rect x=".5" y=".5" width="12" height="15" fill="#fde28a" stroke="#e8c050"/><rect x="10" y="9" width="2.5" height="6.5" fill="#f6cf5e" stroke="#e0b040" stroke-width=".6"/></svg><svg class="abs" style="left:87px;top:13px" width="8" height="8" viewBox="0 0 8 8"><rect x="0" y="0" width="8" height="1.2" fill="#222"/><path d="M0 3H8L4 7.5Z" fill="#222"/></svg><div class="abs" style="left:102px;top:9px;width:1px;height:12px;background:#a0a0a0"></div><div class="t" style="left:110px;top:10px;color:#000;font-size:12px;">Рабочий стол</div><div class="abs" style="left:269px;top:4px;width:214px;height:27px;background:#eac9fb"></div><div class="t" style="left:269px;top:12px;color:#333;font-size:12px;width:214px;text-align:center;letter-spacing:-.3px">Управление</div><div class="abs" style="left:666px;top:15px;width:10px;height:1px;background:#000"></div><div class="abs" style="left:711px;top:10px;width:10px;height:10px;border:1px solid #000"></div><svg class="abs" style="left:756px;top:9px" width="12" height="12" viewBox="0 0 12 12"><path d="M1 1L11 11M11 1L1 11" stroke="#000" stroke-width="1.1"/></svg><div class="abs" style="left:0;top:54px;width:786px;height:1px;background:#dadbdc"></div><div class="abs" style="left:1px;top:31px;width:56px;height:24px;background:#0064b4"></div><div class="t" style="left:1px;top:37px;color:#fff;font-size:12px;width:56px;text-align:center;letter-spacing:-.4px">Файл</div><div class="t" style="left:71px;top:37px;color:#222;font-size:12px;letter-spacing:-.5px">Главная</div><div class="t" style="left:142px;top:37px;color:#222;font-size:12px;letter-spacing:-.4px">Поделиться</div><div class="t" style="left:233px;top:37px;color:#222;font-size:12px;letter-spacing:-.3px">Вид</div><div class="abs" style="left:269px;top:31px;width:1px;height:18px;background:#dadada"></div><div class="abs" style="left:483px;top:31px;width:1px;height:18px;background:#dadada"></div><div class="t" style="left:283px;top:37px;color:#222;font-size:12px;letter-spacing:-.27px">Средства работы с приложениями</div><svg class="abs" style="left:747px;top:39px" width="10" height="6" viewBox="0 0 10 6"><path d="M1 1L5 5L9 1" fill="none" stroke="#999" stroke-width="1"/></svg><svg class="abs" style="left:766px;top:34px" width="16" height="16" viewBox="0 0 16 16"><circle cx="8" cy="8" r="8" fill="#0c5fb8"/><text x="8" y="12.5" text-anchor="middle" font-family="Liberation Sans" font-weight="bold" font-size="12" fill="#fff">?</text></svg><svg class="abs" style="left:14px;top:66px" width="13" height="12" viewBox="0 0 13 12"><path d="M6 1L1 6L6 11M1 6H13" fill="none" stroke="#7a7a7a" stroke-width="1.6"/></svg><svg class="abs" style="left:44px;top:66px" width="13" height="12" viewBox="0 0 13 12"><path d="M7 1L12 6L7 11M12 6H0" fill="none" stroke="#c8c8c8" stroke-width="1.6"/></svg><svg class="abs" style="left:71px;top:69px" width="7" height="5" viewBox="0 0 7 5"><path d="M.5 .5L3.5 3.5L6.5 .5" fill="none" stroke="#777" stroke-width="1.2"/></svg><svg class="abs" style="left:88px;top:65px" width="12" height="13" viewBox="0 0 12 13"><path d="M1 6L6 1L11 6M6 1V13" fill="none" stroke="#7a7a7a" stroke-width="1.6"/></svg><div class="abs" style="left:107px;top:61px;width:452px;height:22px;border:1px solid #d9d9d9"></div><svg class="abs" style="left:110px;top:65px" width="16" height="12" viewBox="0 0 16 12"><rect x=".5" y=".5" width="15" height="11" fill="#1aa2f4" stroke="#0a6cc4"/><rect x="1" y="9" width="14" height="2" fill="#0a4a8a"/><rect x="2" y="9.5" width="1" height="1" fill="#fff"/><rect x="12" y="9.5" width="1" height="1" fill="#fff"/><rect x="14" y="9.5" width="1" height="1" fill="#fff"/></svg><svg class="abs" style="left:133px;top:69px" width="5" height="8" viewBox="0 0 5 8"><path d="M.5 .5L4 4L.5 7.5" fill="none" stroke="#777" stroke-width="1.2"/></svg><div class="t" style="left:146px;top:65px;color:#000;font-size:12px;">Этот компьютер</div><svg class="abs" style="left:246px;top:69px" width="5" height="8" viewBox="0 0 5 8"><path d="M.5 .5L4 4L.5 7.5" fill="none" stroke="#777" stroke-width="1.2"/></svg><div class="t" style="left:260px;top:65px;color:#000;font-size:12px;">Рабочий стол</div><svg class="abs" style="left:345px;top:69px" width="5" height="8" viewBox="0 0 5 8"><path d="M.5 .5L4 4L.5 7.5" fill="none" stroke="#777" stroke-width="1.2"/></svg><svg class="abs" style="left:529px;top:69px" width="10" height="6" viewBox="0 0 10 6"><path d="M1 1L5 5L9 1" fill="none" stroke="#444" stroke-width="1.3"/></svg><div class="abs" style="left:541px;top:62px;width:1px;height:20px;background:#d9d9d9"></div><svg class="abs" style="left:545px;top:65px" width="12" height="13" viewBox="0 0 12 13"><path d="M9.5 4.5A4.5 4.5 0 1 0 10.5 8" fill="none" stroke="#666" stroke-width="1.4"/><path d="M6.5 1.5H10.5V5.5" fill="none" stroke="#666" stroke-width="1.4"/></svg><div class="abs" style="left:571px;top:61px;width:202px;height:22px;border:1px solid #d9d9d9"></div><div class="t" style="left:580px;top:65px;color:#6d6d6d;font-size:12px;">Поиск в: Рабочий стол</div><svg class="abs" style="left:752px;top:67px" width="12" height="12" viewBox="0 0 12 12"><circle cx="7.5" cy="4.5" r="3.3" fill="none" stroke="#555" stroke-width="1.5"/><path d="M5 7L1 11" stroke="#555" stroke-width="1.8"/></svg><div class="abs" style="left:160px;top:90px;width:1px;height:520px;background:#f0f0f0"></div><div class="abs" style="left:1px;top:202px;width:156px;height:24px;background:#e5f3ff"></div><div class="abs" style="left:1px;top:386px;width:156px;height:24px;background:#cce8ff"></div><svg class="abs" style="left:7px;top:115px" width="9" height="6" viewBox="0 0 9 6"><path d="M.5 .5L4.5 4.5L8.5 .5" fill="none" stroke="#444" stroke-width="1.2"/></svg><svg class="abs" style="left:9px;top:362px" width="5" height="8" viewBox="0 0 5 8"><path d="M.5 .5L4 4L.5 7.5" fill="none" stroke="#888" stroke-width="1.2"/></svg><svg class="abs" style="left:9px;top:394px" width="5" height="8" viewBox="0 0 5 8"><path d="M.5 .5L4 4L.5 7.5" fill="none" stroke="#888" stroke-width="1.2"/></svg><svg class="abs" style="left:9px;top:426px" width="5" height="8" viewBox="0 0 5 8"><path d="M.5 .5L4 4L.5 7.5" fill="none" stroke="#888" stroke-width="1.2"/></svg><svg class="abs" style="left:9px;top:458px" width="5" height="8" viewBox="0 0 5 8"><path d="M.5 .5L4 4L.5 7.5" fill="none" stroke="#888" stroke-width="1.2"/></svg><svg class="abs" style="left:27px;top:112px" width="15" height="12" viewBox="0 0 15 12"><path d="M9 0L10.8 4H15L11.6 6.6L13 11L9 8.3L5 11L6.4 6.6L3 4H7.2Z" fill="#2d8fe0"/><path d="M0 5H4M1 7.5H4.5M2 10H5" stroke="#5ab0f0" stroke-width="1"/></svg><div class="t" style="left:46px;top:111px;color:#000;font-size:12px;">Быстрый доступ</div><svg class="abs" style="left:33px;top:134px" width="16" height="16" viewBox="0 0 16 16"><rect x=".5" y="2.5" width="15" height="11" fill="#1aa2f4" stroke="#0a6cc4"/><rect x="1" y="11" width="14" height="2" fill="#0a4a8a"/></svg><div class="t" style="left:54px;top:136px;color:#000;font-size:12px;">Рабочий стол</div><svg class="abs" style="left:144px;top:135px" width="11" height="11" viewBox="0 0 11 11"><path d="M6 1L10 5L8.5 5.5L6.5 7.5L6 9.5L1.5 5L3.5 4.5L5.5 2.5Z" fill="#888"/><path d="M3.5 7.5L.5 10.5" stroke="#888" stroke-width="1.2"/></svg><svg class="abs" style="left:33px;top:158px" width="16" height="16" viewBox="0 0 16 16"><path d="M5 1H11V8H15L8 15L1 8H5Z" fill="#2f86dc"/></svg><div class="t" style="left:54px;top:160px;color:#000;font-size:12px;">Загрузки</div><svg class="abs" style="left:144px;top:159px" width="11" height="11" viewBox="0 0 11 11"><path d="M6 1L10 5L8.5 5.5L6.5 7.5L6 9.5L1.5 5L3.5 4.5L5.5 2.5Z" fill="#888"/><path d="M3.5 7.5L.5 10.5" stroke="#888" stroke-width="1.2"/></svg><svg class="abs" style="left:33px;top:182px" width="16" height="16" viewBox="0 0 16 16"><path d="M2.5 .5H10.5L13.5 3.5V15.5H2.5Z" fill="#fff" stroke="#999"/><path d="M4 4h4M4 6h7M4 8h7M4 10h7M4 12h7" stroke="#3a86c8" stroke-width=".8"/></svg><div class="t" style="left:54px;top:184px;color:#000;font-size:12px;">Документы</div><svg class="abs" style="left:144px;top:183px" width="11" height="11" viewBox="0 0 11 11"><path d="M6 1L10 5L8.5 5.5L6.5 7.5L6 9.5L1.5 5L3.5 4.5L5.5 2.5Z" fill="#888"/><path d="M3.5 7.5L.5 10.5" stroke="#888" stroke-width="1.2"/></svg><svg class="abs" style="left:33px;top:206px" width="16" height="16" viewBox="0 0 16 16"><rect x=".5" y="2.5" width="15" height="11" fill="#fff" stroke="#999"/><rect x="2" y="4" width="12" height="8" fill="#6ab0e0"/><path d="M2 9L6 7L14 10V12H2Z" fill="#2a6a3a"/></svg><div class="t" style="left:54px;top:208px;color:#000;font-size:12px;">Изображения</div><svg class="abs" style="left:144px;top:207px" width="11" height="11" viewBox="0 0 11 11"><path d="M6 1L10 5L8.5 5.5L6.5 7.5L6 9.5L1.5 5L3.5 4.5L5.5 2.5Z" fill="#888"/><path d="M3.5 7.5L.5 10.5" stroke="#888" stroke-width="1.2"/></svg><svg class="abs" style="left:33px;top:230px" width="16" height="16" viewBox="0 0 16 16"><rect x="2.5" y=".5" width="12" height="15" fill="#fde28a" stroke="#e8c050"/><rect x="12" y="9" width="2.5" height="6.5" fill="#f6cf5e"/></svg><div class="t" style="left:54px;top:232px;color:#000;font-size:12px;width:104px;overflow:hidden">kadick-main</div><svg class="abs" style="left:144px;top:231px" width="11" height="11" viewBox="0 0 11 11"><path d="M6 1L10 5L8.5 5.5L6.5 7.5L6 9.5L1.5 5L3.5 4.5L5.5 2.5Z" fill="#888"/><path d="M3.5 7.5L.5 10.5" stroke="#888" stroke-width="1.2"/></svg><svg class="abs" style="left:33px;top:254px" width="16" height="16" viewBox="0 0 16 16"><rect x="2.5" y=".5" width="12" height="15" fill="#fde28a" stroke="#e8c050"/><rect x="12" y="9" width="2.5" height="6.5" fill="#f6cf5e"/></svg><div class="t" style="left:54px;top:256px;color:#000;font-size:12px;width:104px;overflow:hidden">OnlineSimBot-mair</div><svg class="abs" style="left:33px;top:278px" width="16" height="16" viewBox="0 0 16 16"><rect x="2.5" y=".5" width="12" height="15" fill="#fde28a" stroke="#e8c050"/><rect x="12" y="9" width="2.5" height="6.5" fill="#f6cf5e"/></svg><div class="t" style="left:54px;top:280px;color:#000;font-size:12px;width:104px;overflow:hidden">Roblox</div><svg class="abs" style="left:33px;top:302px" width="16" height="16" viewBox="0 0 16 16"><rect x="2.5" y=".5" width="12" height="15" fill="#fde28a" stroke="#e8c050"/><rect x="12" y="9" width="2.5" height="6.5" fill="#f6cf5e"/></svg><div class="t" style="left:54px;top:304px;color:#000;font-size:12px;width:104px;overflow:hidden">Снимки экрана</div><svg class="abs" style="left:33px;top:326px" width="16" height="16" viewBox="0 0 16 16"><rect x="2.5" y=".5" width="12" height="15" fill="#fde28a" stroke="#e8c050"/><rect x="12" y="9" width="2.5" height="6.5" fill="#f6cf5e"/></svg><div class="t" style="left:54px;top:328px;color:#000;font-size:12px;width:104px;overflow:hidden">штеукищгтен</div><svg class="abs" style="left:26px;top:358px" width="16" height="12" viewBox="0 0 16 12"><path d="M3.5 11H14Q16 11 16 8.5Q16 6 13.5 6Q13 2 9 2Q6 2 5 5Q1 5 1 8Q1 11 3.5 11Z" fill="#1a73d8"/><path d="M1 8Q1 5 5 5Q6 2 9 2Q12 2 13 5" fill="#2a8ae8"/></svg><div class="t" style="left:46px;top:360px;color:#000;font-size:12px;">OneDrive</div><svg class="abs" style="left:25px;top:390px" width="17" height="15" viewBox="0 0 17 15"><rect x=".5" y=".5" width="16" height="10" fill="#48c0f8" stroke="#2a7ab8"/><path d="M6 12h5M3 14h11" stroke="#777" stroke-width="1.2"/></svg><div class="t" style="left:46px;top:391px;color:#000;font-size:12px;">Этот компьютер</div><svg class="abs" style="left:26px;top:428px" width="14" height="8" viewBox="0 0 14 8"><path d="M2 1H12L14 4V8H0V4Z" fill="#e0e0e0"/><rect x="0" y="4" width="14" height="4" fill="#444"/><rect x="10" y="5" width="2" height="1.5" fill="#3c3"/></svg><div class="t" style="left:46px;top:423px;color:#000;font-size:12px;">Новый том (D:)</div><svg class="abs" style="left:25px;top:454px" width="16" height="16" viewBox="0 0 16 16"><circle cx="10" cy="6" r="5.5" fill="#3a9ae0"/><path d="M6 3Q10 5 14 3M5 7H15" stroke="#a8d8f8" stroke-width=".8" fill="none"/><rect x=".5" y="6.5" width="10" height="7" fill="#48b8f0" stroke="#2a7ab8"/><path d="M5.5 14v1.5M3 15.5h5" stroke="#666"/></svg><div class="t" style="left:46px;top:455px;color:#000;font-size:12px;">Сеть</div><div class="abs" style="left:432px;top:90px;width:1px;height:20px;background:#e5e5e5"></div><div class="abs" style="left:576px;top:90px;width:1px;height:20px;background:#e5e5e5"></div><div class="abs" style="left:696px;top:90px;width:1px;height:20px;background:#e5e5e5"></div><svg class="abs" style="left:299px;top:89px" width="9" height="6" viewBox="0 0 9 6"><path d="M.5 5L4.5 1L8.5 5" fill="none" stroke="#777" stroke-width="1"/></svg><div class="t" style="left:178.6px;top:95.5px;color:#4c607a;font-size:12px;">Имя</div><div class="t" style="left:438.8px;top:95.5px;color:#4c607a;font-size:12px;letter-spacing:-.2px">Дата изменения</div><div class="t" style="left:583.3px;top:95.5px;color:#4c607a;font-size:12px;">Тип</div><div class="t" style="left:703px;top:95.5px;color:#4c607a;font-size:12px;">Размер</div><div class="abs" style="left:161px;top:114px;width:608px;height:480px;overflow:hidden"><svg class="abs" style="left:18px;top:-3px" width="16" height="16" viewBox="0 0 16 16"><path d="M6.5 12V2.5Q6.5 1.5 7.5 1.5H12.5L15.5 4.5V13.5Q15.5 14.5 14.5 14.5H11.5" fill="#eeeef2" stroke="#3a3a3a" stroke-width="1.1"/><path d="M12.2 1.5V4.8H15.5Z" fill="#3a3a3a"/><path d="M0.5 13.5L3 11H9.5L12 13.5L9.5 16H3Z" fill="#fff"/><path d="M3.3 11.6L1.5 13.5L3.3 15.4M8.7 11.6L10.5 13.5L8.7 15.4" stroke="#333" stroke-width="1" fill="none"/><circle cx="6" cy="13.5" r="1.9" fill="#0a8ad2"/></svg><div class="t" style="left:38.25px;top:-1.3px;color:#000;font-size:12px;">team fat obfuscrated.hta</div><div class="t" style="left:277.8px;top:-1.3px;color:#6d6d6d;font-size:12px;letter-spacing:-.55px">30.03.2024 21:27</div><div class="t" style="left:422.3px;top:-1.3px;color:#6d6d6d;font-size:12px;letter-spacing:-.15px">HTML Application</div><div class="t" style="left:0px;top:-1.3px;color:#6d6d6d;font-size:12px;width:606.7px;text-align:right;letter-spacing:-.3px">4 КБ</div><svg class="abs" style="left:18px;top:18px" width="16" height="16" viewBox="0 0 16 16"><path d="M2.5 .5H10.5L13.5 3.5V15.5H2.5Z" fill="#fff" stroke="#7a7672"/><path d="M10.5 .5V3.5H13.5" fill="#eee" stroke="#7a7672"/><path d="M4.5 4.5h5M4.5 6.5h7M4.5 8.5h7M4.5 10.5h7M4.5 12.5h7" stroke="#8a8a8a" stroke-width="1"/></svg><div class="t" style="left:38.25px;top:19.7px;color:#000;font-size:12px;">team fat obfuscrated</div><div class="t" style="left:277.8px;top:19.7px;color:#6d6d6d;font-size:12px;letter-spacing:-.55px">25.03.2024 23:11</div><div class="t" style="left:422.3px;top:19.7px;color:#6d6d6d;font-size:12px;letter-spacing:-.15px">Текстовый докум...</div><div class="t" style="left:0px;top:19.7px;color:#6d6d6d;font-size:12px;width:606.7px;text-align:right;letter-spacing:-.3px">4 КБ</div><svg class="abs" style="left:18px;top:39px" width="16" height="16" viewBox="0 0 16 16"><path d="M2.5 .5H10.5L13.5 3.5V15.5H2.5Z" fill="#fff" stroke="#7a7672"/><path d="M10.5 .5V3.5H13.5" fill="#eee" stroke="#7a7672"/><path d="M4.5 4.5h5M4.5 6.5h7M4.5 8.5h7M4.5 10.5h7M4.5 12.5h7" stroke="#8a8a8a" stroke-width="1"/></svg><div class="t" style="left:38.25px;top:40.7px;color:#000;font-size:12px;">test ROBLOX</div><div class="t" style="left:277.8px;top:40.7px;color:#6d6d6d;font-size:12px;letter-spacing:-.55px">26.05.2024 23:17</div><div class="t" style="left:422.3px;top:40.7px;color:#6d6d6d;font-size:12px;letter-spacing:-.15px">Текстовый докум...</div><div class="t" style="left:0px;top:40.7px;color:#6d6d6d;font-size:12px;width:606.7px;text-align:right;letter-spacing:-.3px">0 КБ</div><svg class="abs" style="left:18px;top:60px" width="16" height="16" viewBox="0 0 16 16"><rect x="0" y="0.5" width="16" height="4.8" rx="1" fill="#d02a5a"/><rect x="0" y="5.5" width="16" height="4.8" rx="1" fill="#4a4ad0"/><rect x="0" y="10.5" width="16" height="5" rx="1" fill="#2a9a3a"/><path d="M1.5 1.5v2.5M1.5 6.5v2.5M1.5 11.5v2.5" stroke="#f8d030" stroke-width="1"/><rect x="6" y="0" width="4.5" height="16" fill="#e0702a"/><rect x="6.3" y="4.5" width="4" height="3.5" fill="none" stroke="#fff" stroke-width="1"/></svg><div class="t" style="left:38.25px;top:61.7px;color:#000;font-size:12px;">TGMacro2.8.Portable</div><div class="t" style="left:277.8px;top:61.7px;color:#6d6d6d;font-size:12px;letter-spacing:-.55px">07.09.2024 23:52</div><div class="t" style="left:422.3px;top:61.7px;color:#6d6d6d;font-size:12px;letter-spacing:-.15px">Архив ZIP - WinR...</div><div class="t" style="left:0px;top:61.7px;color:#6d6d6d;font-size:12px;width:606.7px;text-align:right;letter-spacing:-.3px">291 КБ</div><svg class="abs" style="left:18px;top:81px" width="16" height="16" viewBox="0 0 16 16"><rect x="0" y="0" width="16" height="16" fill="#020202"/><path d="M8.5 5h4M9 7h3.5M9.5 3.5l2 0" stroke="#9a9a9a" stroke-width="1"/><rect x="12" y="8" width="1" height="1" fill="#c02020"/><rect x=".5" y="8.5" width="7.5" height="7.5" fill="#fbfbfb" stroke="#b8b0a8" stroke-width=".8"/><path d="M2 15Q1.2 12.5 3.2 11.2L2.8 10H6.8V13.5L5.6 12.6Q4 13.2 4.3 15.3Q2.8 15.6 2 15Z" fill="#2c5aa0"/></svg><div class="t" style="left:38.25px;top:82.7px;color:#000;font-size:12px;">The Complex Found Footage (2)</div><div class="t" style="left:277.8px;top:82.7px;color:#6d6d6d;font-size:12px;letter-spacing:-.55px">03.08.2024 17:24</div><div class="t" style="left:422.3px;top:82.7px;color:#6d6d6d;font-size:12px;letter-spacing:-.15px">Ярлык Интернета</div><div class="t" style="left:0px;top:82.7px;color:#6d6d6d;font-size:12px;width:606.7px;text-align:right;letter-spacing:-.3px">1 КБ</div><svg class="abs" style="left:18px;top:102px" width="16" height="16" viewBox="0 0 16 16"><rect x="0" y="0.5" width="16" height="4.8" rx="1" fill="#d02a5a"/><rect x="0" y="5.5" width="16" height="4.8" rx="1" fill="#4a4ad0"/><rect x="0" y="10.5" width="16" height="5" rx="1" fill="#2a9a3a"/><path d="M1.5 1.5v2.5M1.5 6.5v2.5M1.5 11.5v2.5" stroke="#f8d030" stroke-width="1"/><rect x="6" y="0" width="4.5" height="16" fill="#e0702a"/><rect x="6.3" y="4.5" width="4" height="3.5" fill="none" stroke="#fff" stroke-width="1"/></svg><div class="t" style="left:38.25px;top:103.7px;color:#000;font-size:12px;">The Complex Found Footage (2)</div><div class="t" style="left:277.8px;top:103.7px;color:#6d6d6d;font-size:12px;letter-spacing:-.55px">03.08.2024 17:25</div><div class="t" style="left:422.3px;top:103.7px;color:#6d6d6d;font-size:12px;letter-spacing:-.15px">Архив ZIP - WinR...</div><div class="t" style="left:0px;top:103.7px;color:#6d6d6d;font-size:12px;width:606.7px;text-align:right;letter-spacing:-.3px">1 КБ</div><svg class="abs" style="left:18px;top:123px" width="16" height="16" viewBox="0 0 16 16"><rect x="0" y="0" width="16" height="16" fill="#020202"/><path d="M8.5 5h4M9 7h3.5M9.5 3.5l2 0" stroke="#9a9a9a" stroke-width="1"/><rect x="12" y="8" width="1" height="1" fill="#c02020"/><rect x=".5" y="8.5" width="7.5" height="7.5" fill="#fbfbfb" stroke="#b8b0a8" stroke-width=".8"/><path d="M2 15Q1.2 12.5 3.2 11.2L2.8 10H6.8V13.5L5.6 12.6Q4 13.2 4.3 15.3Q2.8 15.6 2 15Z" fill="#2c5aa0"/></svg><div class="t" style="left:38.25px;top:124.7px;color:#000;font-size:12px;">The Complex Found Footage</div><div class="t" style="left:277.8px;top:124.7px;color:#6d6d6d;font-size:12px;letter-spacing:-.55px">02.08.2024 22:53</div><div class="t" style="left:422.3px;top:124.7px;color:#6d6d6d;font-size:12px;letter-spacing:-.15px">Ярлык Интернета</div><div class="t" style="left:0px;top:124.7px;color:#6d6d6d;font-size:12px;width:606.7px;text-align:right;letter-spacing:-.3px">1 КБ</div><svg class="abs" style="left:18px;top:144px" width="16" height="16" viewBox="0 0 16 16"><path d="M2.5 .5H10.5L13.5 3.5V15.5H2.5Z" fill="#fff" stroke="#7a7672"/><path d="M10.5 .5V3.5H13.5" fill="#eee" stroke="#7a7672"/><path d="M4.5 4.5h5M4.5 6.5h7M4.5 8.5h7M4.5 10.5h7M4.5 12.5h7" stroke="#8a8a8a" stroke-width="1"/></svg><div class="t" style="left:38.25px;top:145.7px;color:#000;font-size:12px;">tok3k 5</div><div class="t" style="left:277.8px;top:145.7px;color:#6d6d6d;font-size:12px;letter-spacing:-.55px">20.04.2024 18:43</div><div class="t" style="left:422.3px;top:145.7px;color:#6d6d6d;font-size:12px;letter-spacing:-.15px">Текстовый докум...</div><div class="t" style="left:0px;top:145.7px;color:#6d6d6d;font-size:12px;width:606.7px;text-align:right;letter-spacing:-.3px">0 КБ</div><svg class="abs" style="left:18px;top:165px" width="16" height="16" viewBox="0 0 16 16"><path d="M0 2H6L7 3H16V14H0Z" fill="#f0b400"/><path d="M0 4H16V14H0Z" fill="#ffd020"/><path d="M8 5h3v3h3L9.5 13L5 8h3Z" fill="#20a020"/><rect x=".5" y="8.5" width="7.5" height="7.5" fill="#fbfbfb" stroke="#b8b0a8" stroke-width=".8"/><path d="M2 15Q1.2 12.5 3.2 11.2L2.8 10H6.8V13.5L5.6 12.6Q4 13.2 4.3 15.3Q2.8 15.6 2 15Z" fill="#2c5aa0"/></svg><div class="t" style="left:38.25px;top:166.7px;color:#000;font-size:12px;">uFiler</div><div class="t" style="left:277.8px;top:166.7px;color:#6d6d6d;font-size:12px;letter-spacing:-.55px">23.07.2024 16:26</div><div class="t" style="left:422.3px;top:166.7px;color:#6d6d6d;font-size:12px;letter-spacing:-.15px">Ярлык</div><div class="t" style="left:0px;top:166.7px;color:#6d6d6d;font-size:12px;width:606.7px;text-align:right;letter-spacing:-.3px">2 КБ</div><svg class="abs" style="left:18px;top:186px" width="16" height="16" viewBox="0 0 16 16"><path d="M4 3L10 1L15 3V11L9 14L4 12Z" fill="#b070e0"/><path d="M4 3L9 5L15 3L10 1Z" fill="#e8a8f8"/><rect x=".5" y="8.5" width="7.5" height="7.5" fill="#fbfbfb" stroke="#b8b0a8" stroke-width=".8"/><path d="M2 15Q1.2 12.5 3.2 11.2L2.8 10H6.8V13.5L5.6 12.6Q4 13.2 4.3 15.3Q2.8 15.6 2 15Z" fill="#2c5aa0"/></svg><div class="t" style="left:38.25px;top:187.7px;color:#000;font-size:12px;">VTuber Editor</div><div class="t" style="left:277.8px;top:187.7px;color:#6d6d6d;font-size:12px;letter-spacing:-.55px">29.07.2024 0:36</div><div class="t" style="left:422.3px;top:187.7px;color:#6d6d6d;font-size:12px;letter-spacing:-.15px">Ярлык Интернета</div><div class="t" style="left:0px;top:187.7px;color:#6d6d6d;font-size:12px;width:606.7px;text-align:right;letter-spacing:-.3px">1 КБ</div><svg class="abs" style="left:18px;top:207px" width="16" height="16" viewBox="0 0 16 16"><path d="M2.5 .5H10.5L13.5 3.5V15.5H2.5Z" fill="#fff" stroke="#7a746e"/><rect x="5" y="5.5" width="6" height="6" rx=".8" fill="#3a6ad8"/><path d="M5 10L8 7.5L11 10.5V11.5H5Z" fill="#42c8f8"/></svg><div class="t" style="left:38.25px;top:208.7px;color:#000;font-size:12px;">www.2452376523</div><div class="t" style="left:277.8px;top:208.7px;color:#6d6d6d;font-size:12px;letter-spacing:-.55px">20.06.2024 17:05</div><div class="t" style="left:422.3px;top:208.7px;color:#6d6d6d;font-size:12px;letter-spacing:-.15px">Файл &quot;JPG&quot;</div><div class="t" style="left:0px;top:208.7px;color:#6d6d6d;font-size:12px;width:606.7px;text-align:right;letter-spacing:-.3px">62 КБ</div><svg class="abs" style="left:18px;top:228px" width="16" height="16" viewBox="0 0 16 16"><path d="M6.5 12V2.5Q6.5 1.5 7.5 1.5H12.5L15.5 4.5V13.5Q15.5 14.5 14.5 14.5H11.5" fill="#eeeef2" stroke="#3a3a3a" stroke-width="1.1"/><path d="M12.2 1.5V4.8H15.5Z" fill="#3a3a3a"/><path d="M0.5 13.5L3 11H9.5L12 13.5L9.5 16H3Z" fill="#fff"/><path d="M3.3 11.6L1.5 13.5L3.3 15.4M8.7 11.6L10.5 13.5L8.7 15.4" stroke="#333" stroke-width="1" fill="none"/><circle cx="6" cy="13.5" r="1.9" fill="#0a8ad2"/></svg><div class="t" style="left:38.25px;top:229.7px;color:#000;font-size:12px;">www.hta</div><div class="t" style="left:277.8px;top:229.7px;color:#6d6d6d;font-size:12px;letter-spacing:-.55px">28.04.2024 11:24</div><div class="t" style="left:422.3px;top:229.7px;color:#6d6d6d;font-size:12px;letter-spacing:-.15px">HTML Application</div><div class="t" style="left:0px;top:229.7px;color:#6d6d6d;font-size:12px;width:606.7px;text-align:right;letter-spacing:-.3px">27 КБ</div><svg class="abs" style="left:18px;top:249px" width="16" height="16" viewBox="0 0 16 16"><path d="M2.5 .5H10.5L13.5 3.5V15.5H2.5Z" fill="#fff" stroke="#7a7672"/><path d="M10.5 .5V3.5H13.5" fill="#eee" stroke="#7a7672"/><path d="M4.5 4.5h5M4.5 6.5h7M4.5 8.5h7M4.5 10.5h7M4.5 12.5h7" stroke="#8a8a8a" stroke-width="1"/></svg><div class="t" style="left:38.25px;top:250.7px;color:#000;font-size:12px;">www</div><div class="t" style="left:277.8px;top:250.7px;color:#6d6d6d;font-size:12px;letter-spacing:-.55px">28.04.2024 11:24</div><div class="t" style="left:422.3px;top:250.7px;color:#6d6d6d;font-size:12px;letter-spacing:-.15px">Текстовый докум...</div><div class="t" style="left:0px;top:250.7px;color:#6d6d6d;font-size:12px;width:606.7px;text-align:right;letter-spacing:-.3px">0 КБ</div><svg class="abs" style="left:18px;top:270px" width="16" height="16" viewBox="0 0 16 16"><path d="M6.5 12V2.5Q6.5 1.5 7.5 1.5H12.5L15.5 4.5V13.5Q15.5 14.5 14.5 14.5H11.5" fill="#eeeef2" stroke="#3a3a3a" stroke-width="1.1"/><path d="M12.2 1.5V4.8H15.5Z" fill="#3a3a3a"/><path d="M0.5 13.5L3 11H9.5L12 13.5L9.5 16H3Z" fill="#fff"/><path d="M3.3 11.6L1.5 13.5L3.3 15.4M8.7 11.6L10.5 13.5L8.7 15.4" stroke="#333" stroke-width="1" fill="none"/><circle cx="6" cy="13.5" r="1.9" fill="#0a8ad2"/></svg><div class="t" style="left:38.25px;top:271.7px;color:#000;font-size:12px;">xrifjsfg.hta</div><div class="t" style="left:277.8px;top:271.7px;color:#6d6d6d;font-size:12px;letter-spacing:-.55px">30.03.2024 20:17</div><div class="t" style="left:422.3px;top:271.7px;color:#6d6d6d;font-size:12px;letter-spacing:-.15px">HTML Application</div><div class="t" style="left:0px;top:271.7px;color:#6d6d6d;font-size:12px;width:606.7px;text-align:right;letter-spacing:-.3px">1 КБ</div><svg class="abs" style="left:18px;top:291px" width="16" height="16" viewBox="0 0 16 16"><path d="M2.5 .5H10.5L13.5 3.5V15.5H2.5Z" fill="#fff" stroke="#7a7672"/><path d="M10.5 .5V3.5H13.5" fill="#eee" stroke="#7a7672"/><path d="M4.5 4.5h5M4.5 6.5h7M4.5 8.5h7M4.5 10.5h7M4.5 12.5h7" stroke="#8a8a8a" stroke-width="1"/></svg><div class="t" style="left:38.25px;top:292.7px;color:#000;font-size:12px;">xrifjsfg</div><div class="t" style="left:277.8px;top:292.7px;color:#6d6d6d;font-size:12px;letter-spacing:-.55px">30.03.2024 18:29</div><div class="t" style="left:422.3px;top:292.7px;color:#6d6d6d;font-size:12px;letter-spacing:-.15px">Текстовый докум...</div><div class="t" style="left:0px;top:292.7px;color:#6d6d6d;font-size:12px;width:606.7px;text-align:right;letter-spacing:-.3px">0 КБ</div><svg class="abs" style="left:18px;top:312px" width="16" height="16" viewBox="0 0 16 16"><path d="M4 2L8.5 8" stroke="#ff6a2a" stroke-width="2.2" stroke-linecap="round"/><path d="M13 2L8.5 8" stroke="#ff50b0" stroke-width="2.2" stroke-linecap="round"/><path d="M8.5 8V15" stroke="#f0402a" stroke-width="2.2" stroke-linecap="round"/><rect x=".5" y="8.5" width="7.5" height="7.5" fill="#fbfbfb" stroke="#b8b0a8" stroke-width=".8"/><path d="M2 15Q1.2 12.5 3.2 11.2L2.8 10H6.8V13.5L5.6 12.6Q4 13.2 4.3 15.3Q2.8 15.6 2 15Z" fill="#2c5aa0"/></svg><div class="t" style="left:38.25px;top:313.7px;color:#000;font-size:12px;">Yandex</div><div class="t" style="left:277.8px;top:313.7px;color:#6d6d6d;font-size:12px;letter-spacing:-.55px">30.08.2024 13:36</div><div class="t" style="left:422.3px;top:313.7px;color:#6d6d6d;font-size:12px;letter-spacing:-.15px">Ярлык</div><div class="t" style="left:0px;top:313.7px;color:#6d6d6d;font-size:12px;width:606.7px;text-align:right;letter-spacing:-.3px">3 КБ</div><svg class="abs" style="left:18px;top:333px" width="16" height="16" viewBox="0 0 16 16"><circle cx="9" cy="8" r="6.5" fill="none" stroke="#f03a5a" stroke-width="1.6"/><ellipse cx="9" cy="8" rx="2.8" ry="5" fill="none" stroke="#f03a5a" stroke-width="1.2"/><rect x=".5" y="8.5" width="7.5" height="7.5" fill="#fbfbfb" stroke="#b8b0a8" stroke-width=".8"/><path d="M2 15Q1.2 12.5 3.2 11.2L2.8 10H6.8V13.5L5.6 12.6Q4 13.2 4.3 15.3Q2.8 15.6 2 15Z" fill="#2c5aa0"/></svg><div class="t" style="left:38.25px;top:334.7px;color:#000;font-size:12px;">Браузер Opera GX</div><div class="t" style="left:277.8px;top:334.7px;color:#6d6d6d;font-size:12px;letter-spacing:-.55px">14.08.2024 14:42</div><div class="t" style="left:422.3px;top:334.7px;color:#6d6d6d;font-size:12px;letter-spacing:-.15px">Ярлык</div><div class="t" style="left:0px;top:334.7px;color:#6d6d6d;font-size:12px;width:606.7px;text-align:right;letter-spacing:-.3px">2 КБ</div><svg class="abs" style="left:18px;top:354px" width="16" height="16" viewBox="0 0 16 16"><path d="M2.5 .5H10.5L13.5 3.5V15.5H2.5Z" fill="#fff" stroke="#7a7672"/><path d="M10.5 .5V3.5H13.5" fill="#eee" stroke="#7a7672"/><path d="M4.5 4.5h5M4.5 6.5h7M4.5 8.5h7M4.5 10.5h7M4.5 12.5h7" stroke="#8a8a8a" stroke-width="1"/></svg><div class="t" style="left:38.25px;top:355.7px;color:#000;font-size:12px;">ее гоу</div><div class="t" style="left:277.8px;top:355.7px;color:#6d6d6d;font-size:12px;letter-spacing:-.55px">26.06.2024 22:37</div><div class="t" style="left:422.3px;top:355.7px;color:#6d6d6d;font-size:12px;letter-spacing:-.15px">Текстовый докум...</div><div class="t" style="left:0px;top:355.7px;color:#6d6d6d;font-size:12px;width:606.7px;text-align:right;letter-spacing:-.3px">2 КБ</div><svg class="abs" style="left:18px;top:375px" width="16" height="16" viewBox="0 0 16 16"><path d="M2.5 .5H10.5L13.5 3.5V15.5H2.5Z" fill="#fff" stroke="#8a8a8a"/><path d="M4 3.5h3M4 6h8" stroke="#2a4aa8"/><path d="M4 8.5h3M4 10.5h3M4 12.5h8" stroke="#999" stroke-width=".8"/><rect x="8" y="8" width="4" height="3" fill="#5a9ad0"/></svg><div class="t" style="left:38.25px;top:376.7px;color:#000;font-size:12px;">Новый документ в формате RTF</div><div class="t" style="left:277.8px;top:376.7px;color:#6d6d6d;font-size:12px;letter-spacing:-.55px">15.07.2024 19:06</div><div class="t" style="left:422.3px;top:376.7px;color:#6d6d6d;font-size:12px;letter-spacing:-.15px">Документ в фор...</div><div class="t" style="left:0px;top:376.7px;color:#6d6d6d;font-size:12px;width:606.7px;text-align:right;letter-spacing:-.3px">1 КБ</div><svg class="abs" style="left:18px;top:396px" width="16" height="16" viewBox="0 0 16 16"><rect x=".5" y="1.5" width="15" height="13" fill="#f4f4f4" stroke="#888"/><rect x="1" y="2" width="14" height="2" fill="#ccc"/><circle cx="6" cy="8.5" r="2.5" fill="none" stroke="#999" stroke-width="1.2"/><circle cx="10" cy="11" r="2" fill="none" stroke="#5a9ad0" stroke-width="1.2"/></svg><div class="t" style="left:38.25px;top:397.7px;color:#000;font-size:12px;">ЦЩЦЦ</div><div class="t" style="left:277.8px;top:397.7px;color:#6d6d6d;font-size:12px;letter-spacing:-.55px">15.07.2024 22:40</div><div class="t" style="left:422.3px;top:397.7px;color:#6d6d6d;font-size:12px;letter-spacing:-.15px">Пакетный файл ...</div><div class="t" style="left:0px;top:397.7px;color:#6d6d6d;font-size:12px;width:606.7px;text-align:right;letter-spacing:-.3px">1 КБ</div><svg class="abs" style="left:18px;top:417px" width="16" height="16" viewBox="0 0 16 16"><path d="M2.5 .5H10.5L13.5 3.5V15.5H2.5Z" fill="#fff" stroke="#7a7672"/><path d="M10.5 .5V3.5H13.5" fill="#eee" stroke="#7a7672"/><path d="M4.5 4.5h5M4.5 6.5h7M4.5 8.5h7M4.5 10.5h7M4.5 12.5h7" stroke="#8a8a8a" stroke-width="1"/></svg><div class="t" style="left:38.25px;top:418.7px;color:#000;font-size:12px;">щьп</div><div class="t" style="left:277.8px;top:418.7px;color:#6d6d6d;font-size:12px;letter-spacing:-.55px">15.07.2024 22:36</div><div class="t" style="left:422.3px;top:418.7px;color:#6d6d6d;font-size:12px;letter-spacing:-.15px">Текстовый докум...</div><div class="t" style="left:0px;top:418.7px;color:#6d6d6d;font-size:12px;width:606.7px;text-align:right;letter-spacing:-.3px">0 КБ</div><svg class="abs" style="left:18px;top:438px" width="16" height="16" viewBox="0 0 16 16"><path d="M2.5 .5H10.5L13.5 3.5V15.5H2.5Z" fill="#fff" stroke="#7a746e"/><rect x="5" y="5.5" width="6" height="6" rx=".8" fill="#3a6ad8"/><path d="M5 10L8 7.5L11 10.5V11.5H5Z" fill="#42c8f8"/></svg><div class="t" style="left:38.25px;top:439.7px;color:#000;font-size:12px;">ыуоаш9ы</div><div class="t" style="left:277.8px;top:439.7px;color:#6d6d6d;font-size:12px;letter-spacing:-.55px">28.07.2024 17:36</div><div class="t" style="left:422.3px;top:439.7px;color:#6d6d6d;font-size:12px;letter-spacing:-.15px">Файл &quot;BMP&quot;</div><div class="t" style="left:0px;top:439.7px;color:#6d6d6d;font-size:12px;width:606.7px;text-align:right;letter-spacing:-.3px">0 КБ</div><svg class="abs" style="left:18px;top:459px" width="16" height="16" viewBox="0 0 16 16"><path d="M2.5 .5H10.5L13.5 3.5V15.5H2.5Z" fill="#fff" stroke="#7a7672"/><path d="M10.5 .5V3.5H13.5" fill="#eee" stroke="#7a7672"/><path d="M4.5 4.5h5M4.5 6.5h7M4.5 8.5h7M4.5 10.5h7M4.5 12.5h7" stroke="#8a8a8a" stroke-width="1"/></svg><div class="t" style="left:38.25px;top:460.7px;color:#000;font-size:12px;">ьн до</div><div class="t" style="left:277.8px;top:460.7px;color:#6d6d6d;font-size:12px;letter-spacing:-.55px">28.08.2024 0:54</div><div class="t" style="left:422.3px;top:460.7px;color:#6d6d6d;font-size:12px;letter-spacing:-.15px">Текстовый докум...</div><div class="t" style="left:0px;top:460.7px;color:#6d6d6d;font-size:12px;width:606.7px;text-align:right;letter-spacing:-.3px">11 КБ</div></div><div class="abs" style="left:769px;top:90px;width:17px;height:504px;background:#f0f0f0"></div><svg class="abs" style="left:773px;top:96px" width="9" height="6" viewBox="0 0 9 6"><path d="M.5 5L4.5 1L8.5 5" fill="none" stroke="#555" stroke-width="1.5"/></svg><svg class="abs" style="left:773px;top:582px" width="9" height="6" viewBox="0 0 9 6"><path d="M.5 1L4.5 5L8.5 1" fill="none" stroke="#555" stroke-width="1.5"/></svg><div class="abs" style="left:770px;top:483px;width:14px;height:92px;background:#cdcdcd"></div><div class="abs" style="left:161px;top:594px;width:607px;height:15px;background:#f0f0f0"></div><div class="abs" style="left:177px;top:594px;width:557px;height:15px;background:#cdcdcd"></div><svg class="abs" style="left:166px;top:597px" width="6" height="9" viewBox="0 0 6 9"><path d="M5 .5L1 4.5L5 8.5" fill="none" stroke="#555" stroke-width="2"/></svg><svg class="abs" style="left:757px;top:597px" width="6" height="9" viewBox="0 0 6 9"><path d="M1 .5L5 4.5L1 8.5" fill="none" stroke="#555" stroke-width="2"/></svg><div class="t" style="left:15px;top:614.5px;color:#1e2e44;font-size:12px;letter-spacing:-.25px">Элементов: 114</div><div class="abs" style="left:109px;top:615px;width:1px;height:14px;background:#e8e8e8"></div><div class="abs" style="left:276px;top:615px;width:1px;height:13px;background:#ececec"></div><div class="t" style="left:120px;top:614.5px;color:#1e2e44;font-size:12px;letter-spacing:-.2px">Выбран 1 элемент: 130 МБ</div><div class="abs" style="left:737px;top:610px;width:22px;height:23px;background:#cce8ff;border:1px solid #2e95d8"></div><svg class="abs" style="left:741px;top:615px" width="15" height="14" viewBox="0 0 15 14"><rect x=".5" y=".5" width="4.5" height="4.2" fill="#fff" stroke="#999"/><rect x=".5" y="4.7" width="4.5" height="4.2" fill="#fff" stroke="#999"/><rect x=".5" y="8.9" width="4.5" height="4.2" fill="#fff" stroke="#999"/><circle cx="2.75" cy="2.6" r=".8" fill="#3a7a5a"/><circle cx="2.75" cy="6.8" r=".8" fill="#5a8af8"/><circle cx="2.75" cy="11" r=".8" fill="#e02020"/><path d="M6 2.5h3.5M11 2.5h3.5M6 6.5h3.5M11 6.5h3.5M6 10.5h3.5M11 10.5h3.5" stroke="#777" stroke-width="1.2"/></svg><svg class="abs" style="left:763px;top:615px" width="15" height="12" viewBox="0 0 15 12"><rect x=".5" y=".5" width="14" height="11" fill="#fff" stroke="#999"/><rect x="2" y="2" width="11" height="8" fill="#5aa0e0"/><path d="M2 7Q6 5 13 8V10H2Z" fill="#3a6a4a"/></svg></div>
<div id="tb"><svg class="abs" style="left:15px;top:12px" width="17" height="16" viewBox="0 0 17 16"><path d="M0.6 1.5L7 0.7V7.4H0.6ZM8 0.6L17 0V7.4H8ZM0.6 8.4H7V15.1L0.6 14.3ZM8 8.4H17V16L8 15.2Z" fill="#fff"/></svg><div class="abs" style="left:48px;top:0;width:288px;height:40px;background:#f2f2f2;border-top:1px solid #e4e4e4;border-bottom:1px solid #c8c8c8"></div><svg class="abs" style="left:60px;top:12px" width="17" height="16" viewBox="0 0 17 16"><circle cx="10.5" cy="6" r="5" fill="none" stroke="#000" stroke-width="1.3"/><path d="M7 9.5L1 15.5" stroke="#000" stroke-width="1.4"/></svg><div class="t" style="left:89px;top:11px;font-size:15px;color:#1a1a1a">Поиск</div><svg class="abs" style="left:258px;top:2px" width="78" height="38" viewBox="0 0 78 38">
<defs><linearGradient id="bw" x1="0" y1="0" x2="0" y2="1"><stop offset="0" stop-color="#3ac8c0"/><stop offset="1" stop-color="#a8ecf0"/></linearGradient></defs>
<ellipse cx="40" cy="31.5" rx="33" ry="5" fill="url(#bw)"/>
<path d="M2 29L14 20L20 23L30 14L40 21L52 12L62 20L70 18L76 29Z" fill="#2d6a52"/>
<path d="M6 29L16 23L24 26L34 19L44 25L50 20L60 25L68 23L74 29Z" fill="#8ab07a"/>
<ellipse cx="26" cy="28.5" rx="17" ry="2.2" fill="#d6a45a"/><ellipse cx="56" cy="28.5" rx="16" ry="2.2" fill="#d6a45a"/>
<g stroke="#7a5228" stroke-width="1.4" fill="none"><path d="M12 28Q13 20 10 14"/><path d="M24 28Q28 18 24 6"/><path d="M53 28Q50 18 49 7"/><path d="M61 28Q66 18 64 9"/></g>
<g fill="#2a8a48"><path d="M10 14Q4 12 2 16Q6 13 10 14Q6 9 3 9Q8 10 10 14Q12 9 17 9Q12 11 10 14Q15 12 18 16Q14 13 10 14Z"/><path d="M24 6Q17 3 14 8Q19 5 24 6Q20 0 16 1Q22 2 24 6Q26 0 32 1Q27 3 24 6Q30 4 33 9Q28 5 24 6Z"/><path d="M49 7Q42 4 39 9Q44 6 49 7Q46 1 42 2Q47 3 49 7Q51 1 57 2Q52 4 49 7Q55 5 58 10Q53 6 49 7Z"/><path d="M64 9Q58 6 55 11Q60 8 64 9Q61 4 58 4Q63 5 64 9Q66 4 71 5Q67 6 64 9Q69 8 72 12Q68 9 64 9Z"/></g>
</svg><svg class="abs" style="left:351px;top:8px" width="34" height="25" viewBox="0 0 34 25">
<path d="M0 8.5L12 0.5L24 8.5Z" fill="#1a5ec8"/><rect x="3" y="5" width="18" height="9" fill="#fff"/><path d="M0 8.5L12 15.5L24 8.5V23H0Z" fill="#3ab0f6"/><path d="M0 23L12 13L24 23Z" fill="#2a90e0" opacity=".5"/>
<circle cx="25" cy="19" r="8" fill="#2e2e2e" stroke="#9a9a9a" stroke-width="1"/><text x="25" y="23.5" text-anchor="middle" font-family="Liberation Sans" font-weight="bold" font-size="12" fill="#fff">6</text></svg><svg class="abs" style="left:400px;top:8px" width="24" height="24" viewBox="0 0 24 24"><circle cx="12" cy="12" r="12" fill="#fc3f1d"/><text x="12" y="18.5" text-anchor="middle" font-family="Liberation Sans" font-weight="bold" font-size="17" fill="#fff">Я</text></svg><div class="abs" style="left:437px;top:0;width:48px;height:40px;background:#3a4852"></div><div class="abs" style="left:437px;top:38px;width:48px;height:2px;background:#79b8ec"></div><svg class="abs" style="left:450px;top:10px" width="22" height="18" viewBox="0 0 22 18"><path d="M0 0H8L10 2H18V5H0Z" fill="#e0a018"/><rect x="0" y="4" width="22" height="14" fill="#fdd45a"/><path d="M4.5 10.5H17.5V18H13.5V14.5H8.5V18H4.5Z" fill="#2a8ee0"/></svg><div class="abs" style="left:489px;top:38px;width:41px;height:2px;background:#79b8ec"></div><svg class="abs" style="left:498px;top:8px" width="23" height="24" viewBox="0 0 23 24"><path d="M6.5 7V3.5Q6.5 1.5 8.5 1.5H14.5Q16.5 1.5 16.5 3.5V7" fill="none" stroke="#1aa8ec" stroke-width="2"/><rect x="0" y="6" width="23" height="18" rx="3" fill="#f6f6f6"/><rect x="0" y="6" width="23" height="2" fill="#e0e0e0"/><rect x="6" y="12" width="5" height="5" fill="#f25022"/><rect x="12" y="12" width="5" height="5" fill="#7fba00"/><rect x="6" y="18" width="5" height="5" fill="#00a4ef"/><rect x="12" y="18" width="5" height="5" fill="#ffb900"/></svg><svg class="abs" style="left:547px;top:8px" width="24" height="24" viewBox="0 0 24 24"><circle cx="12" cy="12" r="10.8" fill="none" stroke="#e0284a" stroke-width="1.6"/><ellipse cx="12.5" cy="12" rx="4.8" ry="8.6" fill="none" stroke="#e0284a" stroke-width="1.6"/></svg><svg class="abs" style="left:596px;top:8px" width="24" height="24" viewBox="0 0 48 48"><use href="#s-chrome"/></svg><svg class="abs" style="left:645px;top:8px" width="24" height="24" viewBox="0 0 48 48"><use href="#s-edge"/></svg><div class="abs" style="left:686px;top:38px;width:40px;height:2px;background:#79b8ec"></div><svg class="abs" style="left:694px;top:8px" width="24" height="24" viewBox="0 0 24 24"><path d="M6 1L23 5L18 23L1 19Z" fill="#d8dadc"/><rect x="9" y="9" width="6" height="6" transform="rotate(14 12 12)" fill="#3a3e44"/></svg><div class="abs" style="left:735px;top:38px;width:40px;height:2px;background:#79b8ec"></div><svg class="abs" style="left:745px;top:10px" width="20" height="20" viewBox="0 0 20 20"><defs><linearGradient id="wvg" x1="0" y1="0" x2="0" y2="1"><stop offset="0" stop-color="#222"/><stop offset="1" stop-color="#000"/></linearGradient></defs><rect x="0" y="0" width="20" height="20" rx="3.5" fill="url(#wvg)"/><path d="M2.5 8L5 10.5L7.5 6.5L10 10.5L12.5 7.5L15 10L17.5 10.5" fill="none" stroke="#28e0d8" stroke-width="1.6"/></svg><div class="abs" style="left:784px;top:38px;width:39px;height:2px;background:#79b8ec"></div><svg class="abs" style="left:798px;top:11px" width="13" height="19" viewBox="0 0 13 19"><rect x="0.5" y="0.5" width="12" height="18" rx="6" fill="#2c3138"/><path d="M6.5 1V7M1 7H12" stroke="#23282e" stroke-width="1"/></svg><div class="abs" style="left:832px;top:38px;width:41px;height:2px;background:#79b8ec"></div><svg class="abs" style="left:841px;top:8px" width="24" height="24" viewBox="0 0 24 24"><circle cx="12" cy="12" r="12" fill="#fff"/><path d="M6 5L12 12" stroke="#ff6a2a" stroke-width="3.2" stroke-linecap="round"/><path d="M12 12V20" stroke="#f0402a" stroke-width="3.2" stroke-linecap="round"/><path d="M18 5L12 12" stroke="#ff50b0" stroke-width="3.2" stroke-linecap="round"/></svg><div class="abs" style="left:882px;top:38px;width:40px;height:2px;background:#79b8ec"></div><svg class="abs" style="left:889px;top:7px" width="26" height="26" viewBox="0 0 26 26"><defs><linearGradient id="bsg" x1="0" y1="0" x2="0" y2="1"><stop offset="0" stop-color="#3ad0fa"/><stop offset="1" stop-color="#2a86e0"/></linearGradient></defs><g transform="rotate(13 13 13)" fill="url(#bsg)"><path d="M3 3H23V10H12V13H8V14H3Z"/><path d="M18 12H23V23H3V16H14V13H18Z"/></g></svg><svg class="abs" style="left:1035px;top:15px" width="13" height="8" viewBox="0 0 13 8"><path d="M.5 7.5L6.5 1.5L12.5 7.5" fill="none" stroke="#fff" stroke-width="1.2"/></svg><svg class="abs" style="left:1059px;top:11px" width="12" height="17" viewBox="0 0 12 17"><rect x="1" y="5" width="6" height="7" rx="1" fill="none" stroke="#fff" stroke-width="1.1"/><path d="M7 7L11 5V12L7 10" fill="none" stroke="#fff" stroke-width="1.1"/><path d="M2 2Q5 0 8 2M2 15Q5 17 8 15" fill="none" stroke="#bbb" stroke-width="1"/></svg><svg class="abs" style="left:1081px;top:11px" width="17" height="17" viewBox="0 0 17 17"><path d="M1 6H4L8 2V15L4 11H1Z" fill="none" stroke="#fff" stroke-width="1.1"/><path d="M10.5 6Q12 8.5 10.5 11M12.5 4Q15 8.5 12.5 13M14.5 2Q18 8.5 14.5 15" fill="none" stroke="#fff" stroke-width="1"/></svg><svg class="abs" style="left:1105px;top:11px" width="17" height="17" viewBox="0 0 17 17"><rect x="4.5" y="2.5" width="12" height="9" fill="none" stroke="#fff"/><path d="M10.5 12v3M6 15.5h9" stroke="#fff"/><rect x=".5" y=".5" width="5" height="5" fill="#1e2f3b" stroke="#fff"/></svg><div class="t" style="left:1131px;top:12px;color:#fff;font-size:12px;letter-spacing:-.6px">ENG</div><div class="t" style="left:1168px;top:3px;width:52px;text-align:center;color:#fff;font-size:12px;letter-spacing:-.6px">16:31</div><div class="t" style="left:1166px;top:22px;width:56px;text-align:center;color:#fff;font-size:12px;letter-spacing:-.65px">17.09.2024</div><svg class="abs" style="left:1239px;top:10px" width="28" height="28" viewBox="0 0 28 28"><path d="M0 0H16V12H5L2 15V12H0Z" fill="#fff"/><path d="M3 3h10M3 6h10M3 9h7" stroke="#1e2f3b" stroke-width="1.2"/><circle cx="16.5" cy="18" r="9.5" fill="#2a2a2a" stroke="#777" stroke-width="1"/><text x="16.5" y="22.5" text-anchor="middle" font-family="Liberation Sans" font-size="12.5" fill="#fff" letter-spacing="-.5">23</text></svg><div class="abs" style="left:1275px;top:0;width:1px;height:40px;background:#5a6a74"></div></div>
</body></html>
